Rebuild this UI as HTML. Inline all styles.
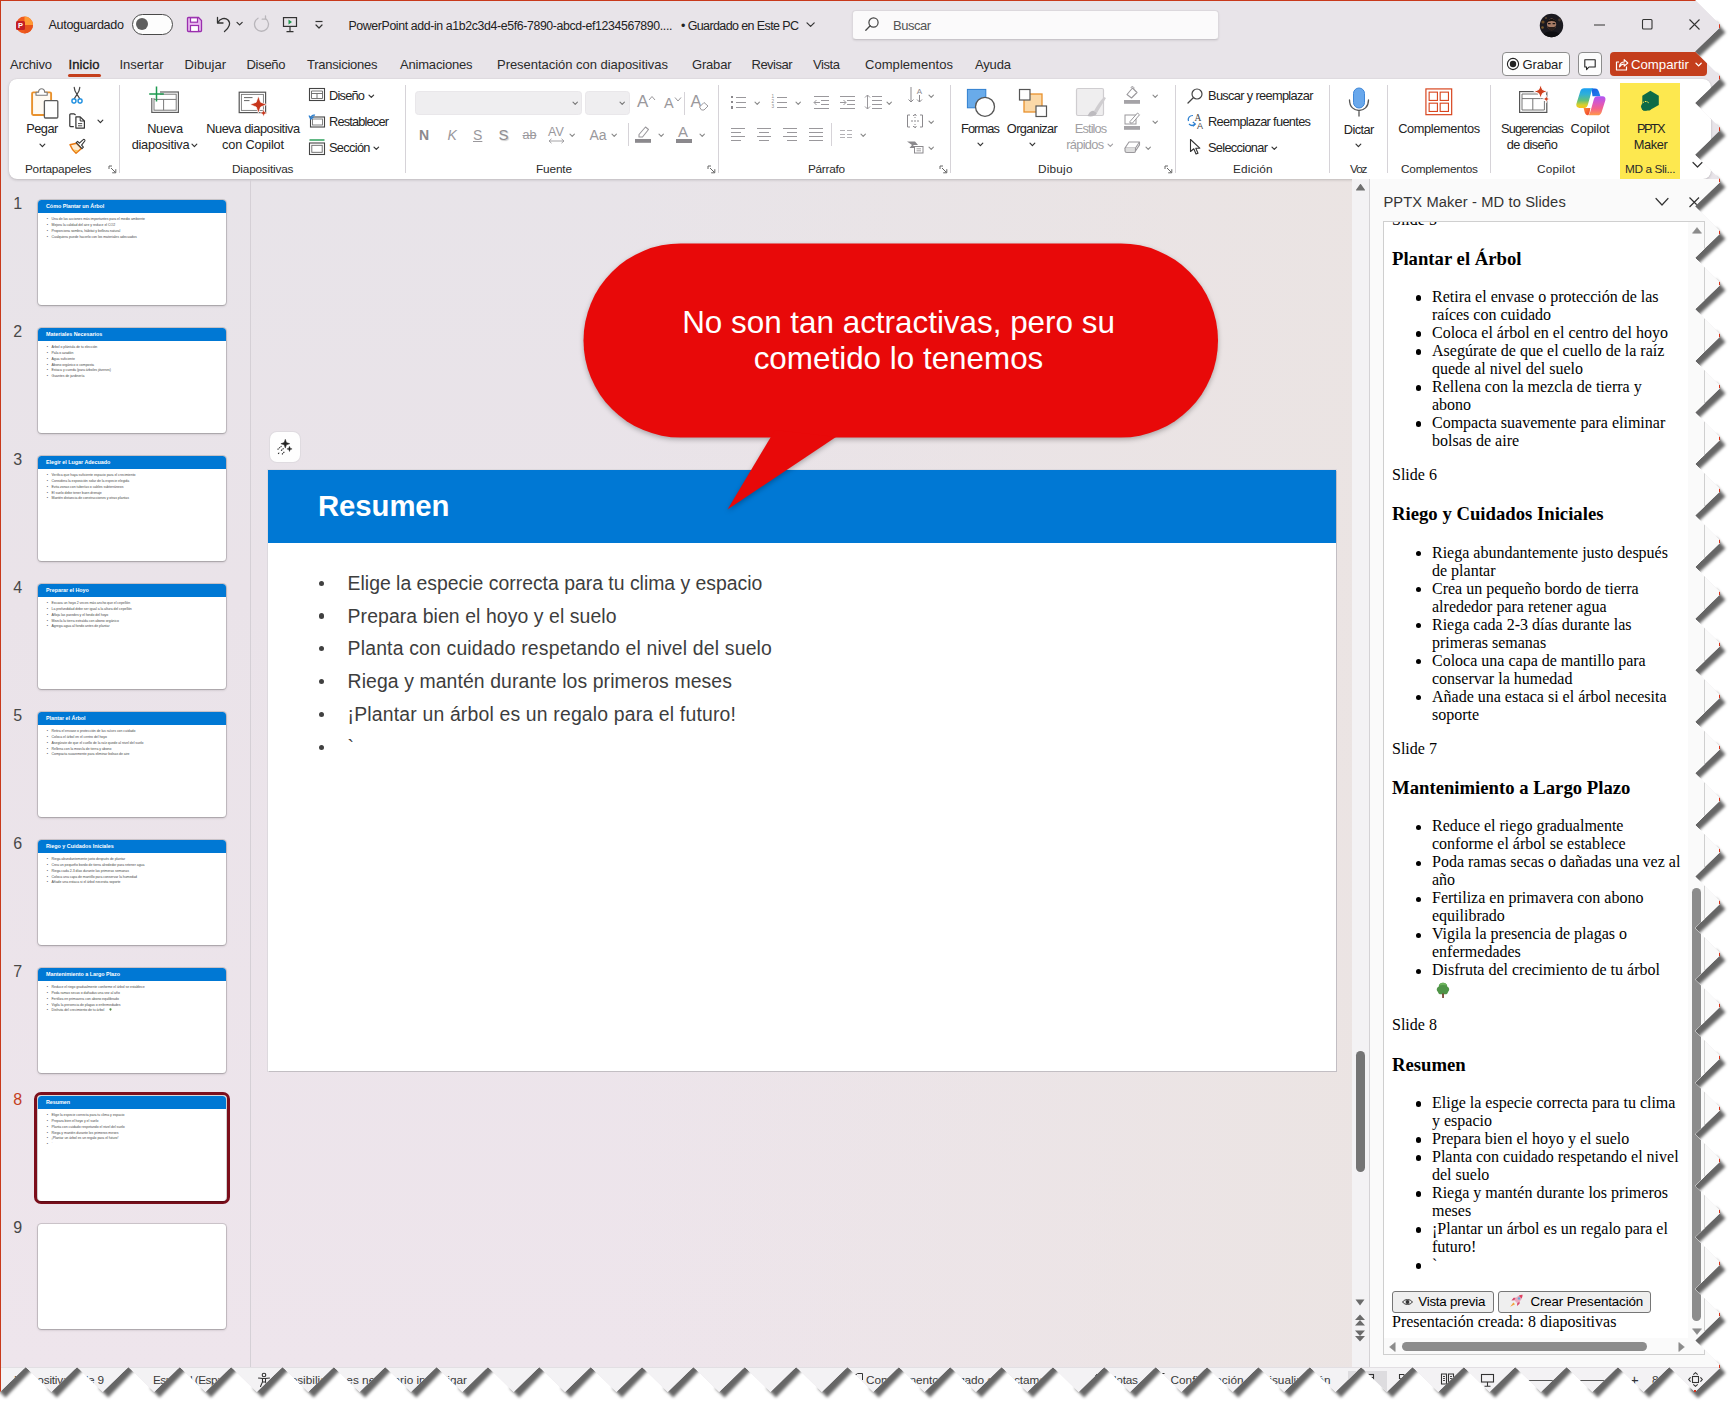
<!DOCTYPE html>
<html><head><meta charset="utf-8"><title>PowerPoint</title>
<style>
html,body{margin:0;padding:0;background:#fff;}
body{width:1735px;height:1407px;overflow:hidden;position:relative;font-family:"Liberation Sans",sans-serif;}
#sh{position:absolute;left:0;top:0;width:1735px;height:1407px;}
#win{position:absolute;left:0;top:0;width:1720px;height:1392px;overflow:hidden;background:#e8e4e9;clip-path:polygon(0.00px 0.00px,1695.00px 0.00px,1720.00px 24.68px,1720.00px 27.48px,1695.00px 51.56px,1720.00px 76.23px,1720.00px 79.03px,1695.00px 103.11px,1720.00px 127.79px,1720.00px 130.59px,1695.00px 154.67px,1720.00px 179.34px,1720.00px 182.14px,1695.00px 206.22px,1720.00px 230.90px,1720.00px 233.70px,1695.00px 257.78px,1720.00px 282.46px,1720.00px 285.26px,1695.00px 309.33px,1720.00px 334.01px,1720.00px 336.81px,1695.00px 360.89px,1720.00px 385.57px,1720.00px 388.37px,1695.00px 412.44px,1720.00px 437.12px,1720.00px 439.92px,1695.00px 464.00px,1720.00px 488.68px,1720.00px 491.48px,1695.00px 515.56px,1720.00px 540.23px,1720.00px 543.03px,1695.00px 567.11px,1720.00px 591.79px,1720.00px 594.59px,1695.00px 618.67px,1720.00px 643.34px,1720.00px 646.14px,1695.00px 670.22px,1720.00px 694.90px,1720.00px 697.70px,1695.00px 721.78px,1720.00px 746.46px,1720.00px 749.26px,1695.00px 773.33px,1720.00px 798.01px,1720.00px 800.81px,1695.00px 824.89px,1720.00px 849.57px,1720.00px 852.37px,1695.00px 876.44px,1720.00px 901.12px,1720.00px 903.92px,1695.00px 928.00px,1720.00px 952.68px,1720.00px 955.48px,1695.00px 979.56px,1720.00px 1004.23px,1720.00px 1007.03px,1695.00px 1031.11px,1720.00px 1055.79px,1720.00px 1058.59px,1695.00px 1082.67px,1720.00px 1107.34px,1720.00px 1110.14px,1695.00px 1134.22px,1720.00px 1158.90px,1720.00px 1161.70px,1695.00px 1185.78px,1720.00px 1210.46px,1720.00px 1213.26px,1695.00px 1237.33px,1720.00px 1262.01px,1720.00px 1264.81px,1695.00px 1288.89px,1720.00px 1313.57px,1720.00px 1316.37px,1695.00px 1340.44px,1720.00px 1365.12px,1720.00px 1367.92px,1695.00px 1392.00px,1669.32px 1367.00px,1643.64px 1392.00px,1617.95px 1367.00px,1592.27px 1392.00px,1566.59px 1367.00px,1540.91px 1392.00px,1515.23px 1367.00px,1489.55px 1392.00px,1463.86px 1367.00px,1438.18px 1392.00px,1412.50px 1367.00px,1386.82px 1392.00px,1361.14px 1367.00px,1335.45px 1392.00px,1309.77px 1367.00px,1284.09px 1392.00px,1258.41px 1367.00px,1232.73px 1392.00px,1207.05px 1367.00px,1181.36px 1392.00px,1155.68px 1367.00px,1130.00px 1392.00px,1104.32px 1367.00px,1078.64px 1392.00px,1052.95px 1367.00px,1027.27px 1392.00px,1001.59px 1367.00px,975.91px 1392.00px,950.23px 1367.00px,924.55px 1392.00px,898.86px 1367.00px,873.18px 1392.00px,847.50px 1367.00px,821.82px 1392.00px,796.14px 1367.00px,770.45px 1392.00px,744.77px 1367.00px,719.09px 1392.00px,693.41px 1367.00px,667.73px 1392.00px,642.05px 1367.00px,616.36px 1392.00px,590.68px 1367.00px,565.00px 1392.00px,539.32px 1367.00px,513.64px 1392.00px,487.95px 1367.00px,462.27px 1392.00px,436.59px 1367.00px,410.91px 1392.00px,385.23px 1367.00px,359.55px 1392.00px,333.86px 1367.00px,308.18px 1392.00px,282.50px 1367.00px,256.82px 1392.00px,231.14px 1367.00px,205.45px 1392.00px,179.77px 1367.00px,154.09px 1392.00px,128.41px 1367.00px,102.73px 1392.00px,77.05px 1367.00px,51.36px 1392.00px,25.68px 1367.00px,0.00px 1392.00px);}
#win div,#win svg{box-sizing:border-box;}
.serif{font-family:"Liberation Serif",serif;}
#pane{position:absolute;left:1383px;top:221px;width:322px;height:1134px;background:#fff;border:1px solid #cfcfcf;overflow:hidden;}
#doc{position:absolute;left:8px;top:-11.3px;width:296px;font-family:"Liberation Serif",serif;font-size:16px;line-height:18px;color:#000;}
#doc p{margin:16px 0 0 0;}
#doc h3{font-size:18.72px;line-height:22px;margin:19.1px 0 0 0;font-weight:bold;}
#doc ul{margin:18.5px 0 0 0;padding:0 0 0 40px;list-style:none;}
#doc li{position:relative;white-space:nowrap;}
#doc li:before{content:"";position:absolute;left:-16.5px;top:7.1px;width:5.4px;height:5.4px;border-radius:50%;background:#000;}
.btn{display:inline-block;box-sizing:border-box;height:22.4px;border:1px solid #767676;border-radius:3px;background:#efefef;font-family:"Liberation Sans",sans-serif;font-size:13.33px;line-height:20.4px;padding:0 0 0 0;vertical-align:top;white-space:nowrap;}
</style></head><body>
<div id="sh"><svg style="position:absolute;left:0;top:0;filter:blur(1.4px)" width="1735" height="1407" viewBox="0 0 1735 1407"><path d="M1716.00 21.58 L1684.00 54.56 L1692.50 63.06 L1725.50 32.58Z M1716.00 73.13 L1684.00 106.11 L1692.50 114.61 L1725.50 84.13Z M1716.00 124.69 L1684.00 157.67 L1692.50 166.17 L1725.50 135.69Z M1716.00 176.24 L1684.00 209.22 L1692.50 217.72 L1725.50 187.24Z M1716.00 227.80 L1684.00 260.78 L1692.50 269.28 L1725.50 238.80Z M1716.00 279.36 L1684.00 312.33 L1692.50 320.83 L1725.50 290.36Z M1716.00 330.91 L1684.00 363.89 L1692.50 372.39 L1725.50 341.91Z M1716.00 382.47 L1684.00 415.44 L1692.50 423.94 L1725.50 393.47Z M1716.00 434.02 L1684.00 467.00 L1692.50 475.50 L1725.50 445.02Z M1716.00 485.58 L1684.00 518.56 L1692.50 527.06 L1725.50 496.58Z M1716.00 537.13 L1684.00 570.11 L1692.50 578.61 L1725.50 548.13Z M1716.00 588.69 L1684.00 621.67 L1692.50 630.17 L1725.50 599.69Z M1716.00 640.24 L1684.00 673.22 L1692.50 681.72 L1725.50 651.24Z M1716.00 691.80 L1684.00 724.78 L1692.50 733.28 L1725.50 702.80Z M1716.00 743.36 L1684.00 776.33 L1692.50 784.83 L1725.50 754.36Z M1716.00 794.91 L1684.00 827.89 L1692.50 836.39 L1725.50 805.91Z M1716.00 846.47 L1684.00 879.44 L1692.50 887.94 L1725.50 857.47Z M1716.00 898.02 L1684.00 931.00 L1692.50 939.50 L1725.50 909.02Z M1716.00 949.58 L1684.00 982.56 L1692.50 991.06 L1725.50 960.58Z M1716.00 1001.13 L1684.00 1034.11 L1692.50 1042.61 L1725.50 1012.13Z M1716.00 1052.69 L1684.00 1085.67 L1692.50 1094.17 L1725.50 1063.69Z M1716.00 1104.24 L1684.00 1137.22 L1692.50 1145.72 L1725.50 1115.24Z M1716.00 1155.80 L1684.00 1188.78 L1692.50 1197.28 L1725.50 1166.80Z M1716.00 1207.36 L1684.00 1240.33 L1692.50 1248.83 L1725.50 1218.36Z M1716.00 1258.91 L1684.00 1291.89 L1692.50 1300.39 L1725.50 1269.91Z M1716.00 1310.47 L1684.00 1343.44 L1692.50 1351.94 L1725.50 1321.47Z M1716.00 1362.02 L1689.50 1389.50 L1698.00 1398.00 L1725.50 1373.02Z M-4.00 1388.00 L28.68 1356.00 L37.18 1364.50 L5.50 1397.50Z M47.36 1388.00 L80.05 1356.00 L88.55 1364.50 L56.86 1397.50Z M98.73 1388.00 L131.41 1356.00 L139.91 1364.50 L108.23 1397.50Z M150.09 1388.00 L182.77 1356.00 L191.27 1364.50 L159.59 1397.50Z M201.45 1388.00 L234.14 1356.00 L242.64 1364.50 L210.95 1397.50Z M252.82 1388.00 L285.50 1356.00 L294.00 1364.50 L262.32 1397.50Z M304.18 1388.00 L336.86 1356.00 L345.36 1364.50 L313.68 1397.50Z M355.55 1388.00 L388.23 1356.00 L396.73 1364.50 L365.05 1397.50Z M406.91 1388.00 L439.59 1356.00 L448.09 1364.50 L416.41 1397.50Z M458.27 1388.00 L490.95 1356.00 L499.45 1364.50 L467.77 1397.50Z M509.64 1388.00 L542.32 1356.00 L550.82 1364.50 L519.14 1397.50Z M561.00 1388.00 L593.68 1356.00 L602.18 1364.50 L570.50 1397.50Z M612.36 1388.00 L645.05 1356.00 L653.55 1364.50 L621.86 1397.50Z M663.73 1388.00 L696.41 1356.00 L704.91 1364.50 L673.23 1397.50Z M715.09 1388.00 L747.77 1356.00 L756.27 1364.50 L724.59 1397.50Z M766.45 1388.00 L799.14 1356.00 L807.64 1364.50 L775.95 1397.50Z M817.82 1388.00 L850.50 1356.00 L859.00 1364.50 L827.32 1397.50Z M869.18 1388.00 L901.86 1356.00 L910.36 1364.50 L878.68 1397.50Z M920.55 1388.00 L953.23 1356.00 L961.73 1364.50 L930.05 1397.50Z M971.91 1388.00 L1004.59 1356.00 L1013.09 1364.50 L981.41 1397.50Z M1023.27 1388.00 L1055.95 1356.00 L1064.45 1364.50 L1032.77 1397.50Z M1074.64 1388.00 L1107.32 1356.00 L1115.82 1364.50 L1084.14 1397.50Z M1126.00 1388.00 L1158.68 1356.00 L1167.18 1364.50 L1135.50 1397.50Z M1177.36 1388.00 L1210.05 1356.00 L1218.55 1364.50 L1186.86 1397.50Z M1228.73 1388.00 L1261.41 1356.00 L1269.91 1364.50 L1238.23 1397.50Z M1280.09 1388.00 L1312.77 1356.00 L1321.27 1364.50 L1289.59 1397.50Z M1331.45 1388.00 L1364.14 1356.00 L1372.64 1364.50 L1340.95 1397.50Z M1382.82 1388.00 L1415.50 1356.00 L1424.00 1364.50 L1392.32 1397.50Z M1434.18 1388.00 L1466.86 1356.00 L1475.36 1364.50 L1443.68 1397.50Z M1485.55 1388.00 L1518.23 1356.00 L1526.73 1364.50 L1495.05 1397.50Z M1536.91 1388.00 L1569.59 1356.00 L1578.09 1364.50 L1546.41 1397.50Z M1588.27 1388.00 L1620.95 1356.00 L1629.45 1364.50 L1597.77 1397.50Z M1639.64 1388.00 L1672.32 1356.00 L1680.82 1364.50 L1649.14 1397.50Z" fill="#000" fill-opacity=".6"/></svg><div id="win">

<div style="position:absolute;left:0.0px;top:179.0px;width:1372.0px;height:1190.0px;background:linear-gradient(90deg,rgba(236,228,229,0) 45%,rgba(235,228,226,.9) 100%),linear-gradient(180deg,#e8e4e9 0%,#eae3e9 35%,#eee5ec 100%);"></div>
<div style="position:absolute;left:0.0px;top:0.0px;width:1720.0px;height:79.0px;background:#e8e4e9;"></div>
<div style="position:absolute;left:0.0px;top:0.0px;width:1720.0px;height:1.2px;background:#c8391b;"></div>
<div style="position:absolute;left:0.0px;top:0.0px;width:1.1px;height:1392.0px;background:#c8391b;"></div>
<div style="position:absolute;left:1718.8px;top:0.0px;width:1.2px;height:1392.0px;background:#d8331a;"></div>
<svg style="position:absolute;left:15.0px;top:16.0px;" width="18" height="18" viewBox="0 0 18 18"><defs><linearGradient id="pg" x1="0" y1="0" x2="1" y2="1"><stop offset="0" stop-color="#ff8f3f"/><stop offset="1" stop-color="#e03a12"/></linearGradient></defs>
<circle cx="9.5" cy="9" r="8.5" fill="#f05a1e"/><path d="M9.5 .5 A8.5 8.5 0 0 1 18 9 L9.5 9 Z" fill="#ff9a33"/><path d="M9.5 9 L18 9 A8.5 8.5 0 0 1 9.5 17.5Z" fill="#e8531c"/>
<rect x="1" y="5" width="9" height="9" rx="1.5" fill="#c41e24"/><text x="5.5" y="12.3" font-size="7.5" font-weight="bold" fill="#fff" text-anchor="middle" font-family="Liberation Sans">P</text></svg>
<div style="position:absolute;top:16.5px;line-height:16px;font-size:12.60px;color:#222;white-space:nowrap;letter-spacing:-0.334px;left:48.5px;">Autoguardado</div>
<div style="position:absolute;left:132.0px;top:14.0px;width:41.0px;height:20.5px;border:1.2px solid #4a4a4a;border-radius:11px;background:#fdfdfd;"></div>
<div style="position:absolute;left:136.0px;top:18.3px;width:12.0px;height:12.0px;border-radius:50%;background:#5e5e5e;"></div>
<svg style="position:absolute;left:186.0px;top:16.0px;" width="17" height="17" viewBox="0 0 17 17"><path d="M1.5 2.5 a1 1 0 0 1 1-1 H12.5 L15.5 4.5 V14.5 a1 1 0 0 1 -1 1 H2.5 a1 1 0 0 1 -1 -1 Z" fill="#e7b7ee" stroke="#9a2fae" stroke-width="1.3"/><rect x="4.5" y="1.8" width="7" height="4.4" fill="#fff" stroke="#9a2fae" stroke-width="1.2"/><rect x="4.5" y="9.5" width="8" height="6" fill="#fff" stroke="#9a2fae" stroke-width="1.2"/></svg>
<svg style="position:absolute;left:215.0px;top:15.0px;" width="18" height="18" viewBox="0 0 18 18"><path d="M2.5 2.5 V8 H8" fill="none" stroke="#333" stroke-width="1.3" stroke-linecap="round" stroke-linejoin="round"/><path d="M2.8 7.6 C5 3.5 10 2.2 13 5 C16 8 14.5 12.5 9.5 16.5" fill="none" stroke="#333" stroke-width="1.3" stroke-linecap="round"/></svg>
<svg style="position:absolute;left:234.9px;top:19.4px" width="9" height="9" viewBox="0 0 9 9"><path d="M2.0 3.3 L4.6 5.9 L7.2 3.3" fill="none" stroke="#333" stroke-width="1.2" stroke-linecap="round" stroke-linejoin="round"/></svg>
<svg style="position:absolute;left:252.0px;top:15.0px;" width="19" height="19" viewBox="0 0 19 19"><path d="M6 3.2 A7 7 0 1 0 13.5 3.5" fill="none" stroke="#b9b6bb" stroke-width="1.3" stroke-linecap="round"/><path d="M13.5 1 V4.2 H10.2" fill="none" stroke="#b9b6bb" stroke-width="1.3" stroke-linecap="round" stroke-linejoin="round"/></svg>
<svg style="position:absolute;left:282.0px;top:16.0px;" width="16" height="18" viewBox="0 0 16 18"><rect x="1.5" y="1.6" width="13" height="8.8" fill="none" stroke="#333" stroke-width="1.2"/><path d="M8 10.5 V15.5 M4.5 15.7 H11.5" stroke="#333" stroke-width="1.2" fill="none"/><path d="M6.5 3.6 L10 6 L6.5 8.4Z" fill="#1e9a50"/></svg>
<svg style="position:absolute;left:314.0px;top:20.0px;" width="10" height="10" viewBox="0 0 10 10"><path d="M1.5 1.5 H8.5" stroke="#333" stroke-width="1.2"/><path d="M2 5 L5 8 L8 5" fill="none" stroke="#333" stroke-width="1.2" stroke-linecap="round" stroke-linejoin="round"/></svg>
<div style="position:absolute;top:17.8px;line-height:16px;font-size:12.30px;color:#222;white-space:nowrap;letter-spacing:-0.363px;left:348.5px;">PowerPoint add-in a1b2c3d4-e5f6-7890-abcd-ef1234567890....</div>
<div style="position:absolute;top:17.8px;line-height:16px;font-size:12.50px;color:#222;white-space:nowrap;letter-spacing:-0.607px;left:681.0px;">• Guardado en Este PC</div>
<svg style="position:absolute;left:804.9px;top:18.9px" width="11" height="11" viewBox="0 0 11 11"><path d="M2.0 3.8 L5.6 7.4 L9.2 3.8" fill="none" stroke="#333" stroke-width="1.2" stroke-linecap="round" stroke-linejoin="round"/></svg>
<div style="position:absolute;left:852.0px;top:10.0px;width:366.5px;height:30.0px;background:#fbfafb;border:1px solid #dcd8dd;border-bottom-color:#c9c5ca;border-radius:4px;box-shadow:0 1px 2px rgba(0,0,0,.08);"></div>
<svg style="position:absolute;left:864.0px;top:16.0px;" width="16" height="16" viewBox="0 0 16 16"><circle cx="9.5" cy="6.5" r="4.6" fill="none" stroke="#444" stroke-width="1.2"/><path d="M6.2 9.8 L1.8 14.2" stroke="#444" stroke-width="1.3" stroke-linecap="round"/></svg>
<div style="position:absolute;top:16.5px;line-height:17px;font-size:13.00px;color:#555;white-space:nowrap;letter-spacing:-0.492px;left:893.0px;">Buscar</div>
<svg style="position:absolute;left:1539.0px;top:12.5px;" width="25" height="25" viewBox="0 0 25 25"><defs><clipPath id="avc"><circle cx="12.5" cy="12.5" r="11.7"/></clipPath></defs><g clip-path="url(#avc)"><rect width="25" height="25" fill="#1b1a20"/><circle cx="4" cy="9" r="1.6" fill="#6a4a22"/><circle cx="3.5" cy="14.5" r="1.3" fill="#7a5a2a"/><circle cx="20.5" cy="7" r="1.4" fill="#4a3a30"/><circle cx="7" cy="5" r="1.1" fill="#5a4630"/><path d="M3 25 C4 19.5 8 18.5 12.5 18.5 C17 18.5 21 19.5 22 25Z" fill="#0e0e11"/><ellipse cx="12.6" cy="11.4" rx="4.6" ry="5.8" fill="#a87c66"/><path d="M7.8 10 C7.4 4.6 17.8 4.6 17.4 10 C16.4 7.2 9 7.2 7.8 10Z" fill="#17120f"/><path d="M8.2 12.6 C8.6 19.4 16.6 19.4 17 12.6 C15.6 14.6 14 14 12.6 14 C11.2 14 9.6 14.6 8.2 12.6Z" fill="#2a1f1b"/><path d="M9 10.6 H11.6 M13.6 10.6 H16.2" stroke="#1a1513" stroke-width="1.1"/></g></svg>
<svg style="position:absolute;left:1593.0px;top:18.0px;" width="14" height="14" viewBox="0 0 14 14"><path d="M1 7 H12" stroke="#333" stroke-width="1.1"/></svg>
<svg style="position:absolute;left:1641.0px;top:18.0px;" width="14" height="14" viewBox="0 0 14 14"><rect x="1.5" y="1.5" width="9.5" height="9.5" rx="1" fill="none" stroke="#333" stroke-width="1.1"/></svg>
<svg style="position:absolute;left:1688.0px;top:18.0px;" width="14" height="14" viewBox="0 0 14 14"><path d="M1.5 1.5 L11.5 11.5 M11.5 1.5 L1.5 11.5" stroke="#333" stroke-width="1.1"/></svg>
<div style="position:absolute;top:55.5px;line-height:17px;font-size:13.00px;color:#2b2b2b;white-space:nowrap;letter-spacing:-0.225px;left:10.0px;">Archivo</div>
<div style="position:absolute;top:55.5px;line-height:17px;font-size:13.00px;color:#1a1a1a;white-space:nowrap;letter-spacing:0.130px;left:68.5px;-webkit-text-stroke:.35px #1a1a1a;">Inicio</div>
<div style="position:absolute;top:55.5px;line-height:17px;font-size:13.00px;color:#2b2b2b;white-space:nowrap;letter-spacing:-0.010px;left:119.5px;">Insertar</div>
<div style="position:absolute;top:55.5px;line-height:17px;font-size:13.00px;color:#2b2b2b;white-space:nowrap;letter-spacing:0.052px;left:184.5px;">Dibujar</div>
<div style="position:absolute;top:55.5px;line-height:17px;font-size:13.00px;color:#2b2b2b;white-space:nowrap;letter-spacing:-0.294px;left:246.5px;">Diseño</div>
<div style="position:absolute;top:55.5px;line-height:17px;font-size:13.00px;color:#2b2b2b;white-space:nowrap;letter-spacing:-0.247px;left:307.0px;">Transiciones</div>
<div style="position:absolute;top:55.5px;line-height:17px;font-size:13.00px;color:#2b2b2b;white-space:nowrap;letter-spacing:-0.193px;left:400.0px;">Animaciones</div>
<div style="position:absolute;top:55.5px;line-height:17px;font-size:13.00px;color:#2b2b2b;white-space:nowrap;letter-spacing:-0.036px;left:497.0px;">Presentación con diapositivas</div>
<div style="position:absolute;top:55.5px;line-height:17px;font-size:13.00px;color:#2b2b2b;white-space:nowrap;letter-spacing:-0.192px;left:692.0px;">Grabar</div>
<div style="position:absolute;top:55.5px;line-height:17px;font-size:13.00px;color:#2b2b2b;white-space:nowrap;letter-spacing:-0.511px;left:751.5px;">Revisar</div>
<div style="position:absolute;top:55.5px;line-height:17px;font-size:13.00px;color:#2b2b2b;white-space:nowrap;letter-spacing:-0.417px;left:813.0px;">Vista</div>
<div style="position:absolute;top:55.5px;line-height:17px;font-size:13.00px;color:#2b2b2b;white-space:nowrap;letter-spacing:0.052px;left:865.0px;">Complementos</div>
<div style="position:absolute;top:55.5px;line-height:17px;font-size:13.00px;color:#2b2b2b;white-space:nowrap;letter-spacing:-0.157px;left:975.0px;">Ayuda</div>
<div style="position:absolute;left:68.0px;top:74.0px;width:32.5px;height:2.6px;background:#c43e1c;border-radius:1.5px;"></div>
<div style="position:absolute;left:1501.5px;top:52.0px;width:68.0px;height:23.5px;background:#fdfdfd;border:1px solid #8d8d8d;border-radius:4px;"></div>
<svg style="position:absolute;left:1506.0px;top:56.7px;" width="14" height="14" viewBox="0 0 14 14"><circle cx="7" cy="7" r="5.6" fill="none" stroke="#222" stroke-width="1.1"/><circle cx="7" cy="7" r="3.2" fill="#222"/></svg>
<div style="position:absolute;top:55.8px;line-height:17px;font-size:13.00px;color:#222;white-space:nowrap;letter-spacing:-0.092px;left:1522.5px;">Grabar</div>
<div style="position:absolute;left:1578.0px;top:52.0px;width:23.5px;height:23.5px;background:#fdfdfd;border:1px solid #8d8d8d;border-radius:4px;"></div>
<svg style="position:absolute;left:1583.0px;top:58.0px;" width="14" height="14" viewBox="0 0 14 14"><path d="M1.8 1.8 H12.2 V9 H6 L3.6 11.6 V9 H1.8 Z" fill="none" stroke="#222" stroke-width="1.1" stroke-linejoin="round"/></svg>
<div style="position:absolute;left:1610.0px;top:52.0px;width:97.0px;height:23.5px;background:#c43e1c;border-radius:4px;"></div>
<svg style="position:absolute;left:1614.0px;top:57.0px;" width="15" height="15" viewBox="0 0 15 15"><path d="M5 5 H2.5 V13 H12.5 V9.5" fill="none" stroke="#fff" stroke-width="1.2" stroke-linejoin="round"/><path d="M5.5 10 C5.5 6.5 8 5 10.2 5 V2.6 L13.8 6 L10.2 9.2 V7 C8.5 7 6.8 7.6 5.5 10Z" fill="none" stroke="#fff" stroke-width="1.1" stroke-linejoin="round"/></svg>
<div style="position:absolute;top:55.8px;line-height:17px;font-size:13.20px;color:#fff;white-space:nowrap;letter-spacing:0.007px;left:1631.0px;">Compartir</div>
<svg style="position:absolute;left:1694.4px;top:59.9px" width="9" height="9" viewBox="0 0 9 9"><path d="M2.0 3.3 L4.6 5.9 L7.2 3.3" fill="none" stroke="#fff" stroke-width="1.3" stroke-linecap="round" stroke-linejoin="round"/></svg>
<div style="position:absolute;left:9.0px;top:79.0px;width:1701.5px;height:100.0px;background:#fff;border-radius:8px;box-shadow:0 1px 3px rgba(0,0,0,.18),0 0 1px rgba(0,0,0,.12);"></div>
<div style="position:absolute;left:119.3px;top:85.0px;width:1.0px;height:88.0px;background:#d6d3d8;"></div>
<div style="position:absolute;left:404.8px;top:85.0px;width:1.0px;height:88.0px;background:#d6d3d8;"></div>
<div style="position:absolute;left:718.3px;top:85.0px;width:1.0px;height:88.0px;background:#d6d3d8;"></div>
<div style="position:absolute;left:949.8px;top:85.0px;width:1.0px;height:88.0px;background:#d6d3d8;"></div>
<div style="position:absolute;left:1174.8px;top:85.0px;width:1.0px;height:88.0px;background:#d6d3d8;"></div>
<div style="position:absolute;left:1328.8px;top:85.0px;width:1.0px;height:88.0px;background:#d6d3d8;"></div>
<div style="position:absolute;left:1386.8px;top:85.0px;width:1.0px;height:88.0px;background:#d6d3d8;"></div>
<div style="position:absolute;left:1489.8px;top:85.0px;width:1.0px;height:88.0px;background:#d6d3d8;"></div>
<div style="position:absolute;left:1620.2px;top:83.2px;width:59.8px;height:96.0px;background:#fde84f;"></div>
<div style="position:absolute;top:161.5px;line-height:15px;font-size:11.80px;color:#2b2b2b;white-space:nowrap;letter-spacing:-0.276px;left:25.0px;">Portapapeles</div>
<div style="position:absolute;top:161.5px;line-height:15px;font-size:11.80px;color:#2b2b2b;white-space:nowrap;letter-spacing:-0.192px;left:232.0px;">Diapositivas</div>
<div style="position:absolute;top:161.5px;line-height:15px;font-size:11.80px;color:#2b2b2b;white-space:nowrap;letter-spacing:-0.148px;left:536.0px;">Fuente</div>
<div style="position:absolute;top:161.5px;line-height:15px;font-size:11.80px;color:#2b2b2b;white-space:nowrap;letter-spacing:-0.283px;left:808.0px;">Párrafo</div>
<div style="position:absolute;top:161.5px;line-height:15px;font-size:11.80px;color:#2b2b2b;white-space:nowrap;letter-spacing:0.209px;left:1038.0px;">Dibujo</div>
<div style="position:absolute;top:161.5px;line-height:15px;font-size:11.80px;color:#2b2b2b;white-space:nowrap;letter-spacing:0.133px;left:1233.0px;">Edición</div>
<div style="position:absolute;top:161.5px;line-height:15px;font-size:11.80px;color:#2b2b2b;white-space:nowrap;letter-spacing:-1.091px;left:1350.0px;">Voz</div>
<div style="position:absolute;top:161.5px;line-height:15px;font-size:11.80px;color:#2b2b2b;white-space:nowrap;letter-spacing:-0.214px;left:1401.0px;">Complementos</div>
<div style="position:absolute;top:161.5px;line-height:15px;font-size:11.80px;color:#2b2b2b;white-space:nowrap;letter-spacing:0.211px;left:1537.0px;">Copilot</div>
<div style="position:absolute;top:161.5px;line-height:15px;font-size:11.80px;color:#2b2b2b;white-space:nowrap;letter-spacing:-0.392px;left:1625.0px;">MD a Sli...</div>
<svg style="position:absolute;left:108.0px;top:165.0px;" width="9" height="9" viewBox="0 0 9 9"><path d="M1 4 V1 H4" fill="none" stroke="#666" stroke-width="1"/><path d="M3 3 L7.5 7.5 M7.8 4.2 V7.8 H4.2" fill="none" stroke="#666" stroke-width="1"/></svg>
<svg style="position:absolute;left:707.0px;top:165.0px;" width="9" height="9" viewBox="0 0 9 9"><path d="M1 4 V1 H4" fill="none" stroke="#666" stroke-width="1"/><path d="M3 3 L7.5 7.5 M7.8 4.2 V7.8 H4.2" fill="none" stroke="#666" stroke-width="1"/></svg>
<svg style="position:absolute;left:939.0px;top:165.0px;" width="9" height="9" viewBox="0 0 9 9"><path d="M1 4 V1 H4" fill="none" stroke="#666" stroke-width="1"/><path d="M3 3 L7.5 7.5 M7.8 4.2 V7.8 H4.2" fill="none" stroke="#666" stroke-width="1"/></svg>
<svg style="position:absolute;left:1164.0px;top:165.0px;" width="9" height="9" viewBox="0 0 9 9"><path d="M1 4 V1 H4" fill="none" stroke="#666" stroke-width="1"/><path d="M3 3 L7.5 7.5 M7.8 4.2 V7.8 H4.2" fill="none" stroke="#666" stroke-width="1"/></svg>
<svg style="position:absolute;left:1691.0px;top:159.0px;" width="13" height="12" viewBox="0 0 13 12"><path d="M2 3.5 L6.5 8 L11 3.5" fill="none" stroke="#333" stroke-width="1.2" stroke-linecap="round" stroke-linejoin="round"/></svg>
<svg style="position:absolute;left:26.0px;top:84.0px;" width="36" height="38" viewBox="0 0 36 38"><rect x="6.1" y="8.4" width="19" height="22.6" rx="1.2" fill="#fffaf2" stroke="#e8912d" stroke-width="1.9"/><path d="M10 11.2 V8.2 H12.6 C12.2 3.6 19 3.6 18.6 8.2 H21.2 V11.2Z" fill="#fff" stroke="#7a7a7a" stroke-width="1.1" stroke-linejoin="round"/><rect x="18.4" y="16.6" width="13.4" height="17.4" rx="1" fill="#fff" stroke="#5a5a5a" stroke-width="1.3"/></svg>
<div style="position:absolute;top:120.2px;line-height:17px;font-size:12.80px;color:#242424;white-space:nowrap;letter-spacing:-0.540px;left:42.0px;width:1200px;margin-left:-600px;text-align:center;">Pegar</div>
<svg style="position:absolute;left:37.6px;top:141.1px" width="8" height="8" viewBox="0 0 8 8"><path d="M2.0 3.2 L4.4 5.6 L6.8 3.2" fill="none" stroke="#333" stroke-width="1.2" stroke-linecap="round" stroke-linejoin="round"/></svg>
<svg style="position:absolute;left:68.0px;top:85.0px;" width="18" height="20" viewBox="0 0 18 20"><path d="M6.2 2.4 C6.4 5 7.6 7.6 9 9.4 L11.8 13.8 M11.8 2.4 C11.6 5 10.4 7.6 9 9.4 L6.2 13.8" stroke="#444" stroke-width="1.2" fill="none" stroke-linecap="round"/><rect x="4" y="14" width="3.9" height="3.9" rx="1.3" fill="#fff" stroke="#1e8fe0" stroke-width="1.5"/><rect x="10.1" y="14" width="3.9" height="3.9" rx="1.3" fill="#fff" stroke="#1e8fe0" stroke-width="1.5"/></svg>
<svg style="position:absolute;left:67.0px;top:111.0px;" width="20" height="20" viewBox="0 0 20 20"><path d="M7 2.8 H3.8 A1 1 0 0 0 2.8 3.8 V14.8 A1 1 0 0 0 3.8 15.6 H6.8 M7 2.8 L8.6 4" fill="none" stroke="#333" stroke-width="1.2"/><path d="M8.9 5.9 H13.2 L17.4 10 V17.1 H8.9Z" fill="#fff" stroke="#333" stroke-width="1.2" stroke-linejoin="round"/><path d="M13.2 6 V10 H17.2" fill="none" stroke="#333" stroke-width="1"/><path d="M11 12.6 H15.2 M11 14.8 H15.2" stroke="#333" stroke-width=".9"/></svg>
<svg style="position:absolute;left:95.6px;top:117.1px" width="8" height="8" viewBox="0 0 8 8"><path d="M2.0 3.2 L4.4 5.6 L6.8 3.2" fill="none" stroke="#333" stroke-width="1.2" stroke-linecap="round" stroke-linejoin="round"/></svg>
<svg style="position:absolute;left:67.0px;top:137.0px;" width="20" height="19" viewBox="0 0 20 19"><path d="M9.5 6.2 L3 7.8 C4.2 11 6 13.6 9 16.2 L14.5 11.4Z" fill="#fdebd2" stroke="#e8770f" stroke-width="1.4" stroke-linejoin="round"/><path d="M6.2 12.6 L9.2 15.4 L11.4 13.2Z" fill="#f8c15a"/><path d="M9.2 5.6 L15 11.6 L16.4 10.2 L14.6 8.2 L17.8 4 C18.4 3 17 1.8 16.2 2.6 L12.4 6.2 L10.6 4.4Z" fill="#fff" stroke="#333" stroke-width="1.1" stroke-linejoin="round"/></svg>
<svg style="position:absolute;left:147.0px;top:84.0px;" width="36" height="32" viewBox="0 0 36 32"><rect x="4.8" y="8" width="26.6" height="20.4" fill="#fff" stroke="#5f5f5f" stroke-width="1.2"/><rect x="7" y="10.2" width="22.2" height="16" fill="none" stroke="#7a7a7a" stroke-width="1"/><path d="M7 15.4 H29.2 M16.6 15.4 V26.2" stroke="#7a7a7a" stroke-width="1"/><rect x="1" y="1" width="12" height="13" fill="#fff"/><path d="M9.5 2.6 V17.4 M2.2 10 H16.8" stroke="#1e9a50" stroke-width="1.5"/></svg>
<div style="position:absolute;top:120.2px;line-height:17px;font-size:12.80px;color:#242424;white-space:nowrap;letter-spacing:-0.250px;left:165.0px;width:1200px;margin-left:-600px;text-align:center;">Nueva</div>
<div style="position:absolute;top:136.2px;line-height:17px;font-size:12.80px;color:#242424;white-space:nowrap;letter-spacing:-0.248px;left:160.5px;width:1200px;margin-left:-600px;text-align:center;">diapositiva</div>
<svg style="position:absolute;left:190.1px;top:141.1px" width="8" height="8" viewBox="0 0 8 8"><path d="M2.0 3.2 L4.4 5.6 L6.8 3.2" fill="none" stroke="#333" stroke-width="1.2" stroke-linecap="round" stroke-linejoin="round"/></svg>
<svg style="position:absolute;left:236.0px;top:88.0px;" width="34" height="32" viewBox="0 0 34 32"><rect x="3.2" y="4.2" width="26.4" height="20.4" fill="#fff" stroke="#555" stroke-width="1.2"/><rect x="5.4" y="6.4" width="22" height="16" fill="none" stroke="#777" stroke-width=".9"/><path d="M8 9.6 H16.5 M8 12.6 H13.5" stroke="#666" stroke-width="1"/><path d="M22.4 8 L24.6 14.2 L30.8 16.6 L24.6 19 L22.4 25.2 L20.2 19 L14 16.6 L20.2 14.2Z" fill="#c7361c" stroke="#fff" stroke-width=".7"/><path d="M27.6 21.4 L28.6 24 L31.2 25 L28.6 26 L27.6 28.6 L26.6 26 L24 25 L26.6 24Z" fill="#c7361c" stroke="#fff" stroke-width=".5"/></svg>
<div style="position:absolute;top:120.2px;line-height:17px;font-size:12.80px;color:#242424;white-space:nowrap;letter-spacing:-0.440px;left:253.0px;width:1200px;margin-left:-600px;text-align:center;">Nueva diapositiva</div>
<div style="position:absolute;top:136.2px;line-height:17px;font-size:12.80px;color:#242424;white-space:nowrap;letter-spacing:-0.204px;left:253.0px;width:1200px;margin-left:-600px;text-align:center;">con Copilot</div>
<svg style="position:absolute;left:308.0px;top:87.0px;" width="18" height="16" viewBox="0 0 18 16"><rect x="1.5" y="1.5" width="15" height="12" fill="#fff" stroke="#444" stroke-width="1.1"/><path d="M3.5 4 H14.5 M3.5 6.5 H14.5 M9 6.5 V11.5 M3.5 4 V11.5 H14.5 V4" fill="none" stroke="#666" stroke-width=".9"/></svg>
<div style="position:absolute;top:87.0px;line-height:17px;font-size:12.80px;color:#242424;white-space:nowrap;letter-spacing:-0.769px;left:329.0px;">Diseño</div>
<svg style="position:absolute;left:366.7px;top:91.7px" width="8" height="8" viewBox="0 0 8 8"><path d="M2.0 3.1 L4.3 5.4 L6.6 3.1" fill="none" stroke="#333" stroke-width="1.2" stroke-linecap="round" stroke-linejoin="round"/></svg>
<svg style="position:absolute;left:308.0px;top:112.0px;" width="18" height="17" viewBox="0 0 18 17"><rect x="2.5" y="5" width="14" height="10" fill="#fff" stroke="#444" stroke-width="1.1"/><rect x="4.5" y="7" width="10" height="6" fill="none" stroke="#777" stroke-width=".9"/><path d="M7 3.2 C4.5 2.5 2.5 4.5 2.8 7" fill="none" stroke="#2a7fd1" stroke-width="1.3"/><path d="M1 3.5 L2.8 7.2 L5.5 4.8" fill="none" stroke="#2a7fd1" stroke-width="1.2" stroke-linejoin="round"/></svg>
<div style="position:absolute;top:113.0px;line-height:17px;font-size:12.80px;color:#242424;white-space:nowrap;letter-spacing:-0.830px;left:329.0px;">Restablecer</div>
<svg style="position:absolute;left:308.0px;top:138.0px;" width="18" height="18" viewBox="0 0 18 18"><path d="M1.5 2 H16.5" stroke="#1e9a50" stroke-width="1.4"/><rect x="1.5" y="5" width="15" height="11.5" fill="#fff" stroke="#444" stroke-width="1.1"/><rect x="3.8" y="7.3" width="10.4" height="7" fill="none" stroke="#666" stroke-width=".9"/></svg>
<div style="position:absolute;top:139.0px;line-height:17px;font-size:12.80px;color:#242424;white-space:nowrap;letter-spacing:-0.673px;left:329.0px;">Sección</div>
<svg style="position:absolute;left:371.7px;top:143.7px" width="8" height="8" viewBox="0 0 8 8"><path d="M2.0 3.1 L4.3 5.4 L6.6 3.1" fill="none" stroke="#333" stroke-width="1.2" stroke-linecap="round" stroke-linejoin="round"/></svg>
<div style="position:absolute;left:414.5px;top:91.0px;width:167.0px;height:23.5px;background:#efeef0;border:1px solid #e9e7ea;border-radius:3.5px;"></div>
<div style="position:absolute;left:584.5px;top:91.0px;width:45.5px;height:23.5px;background:#efeef0;border:1px solid #e9e7ea;border-radius:3.5px;"></div>
<svg style="position:absolute;left:570.8px;top:98.8px" width="8" height="8" viewBox="0 0 8 8"><path d="M2.0 3.1 L4.2 5.3 L6.4 3.1" fill="none" stroke="#777" stroke-width="1.1" stroke-linecap="round" stroke-linejoin="round"/></svg>
<svg style="position:absolute;left:618.3px;top:98.8px" width="8" height="8" viewBox="0 0 8 8"><path d="M2.0 3.1 L4.2 5.3 L6.4 3.1" fill="none" stroke="#777" stroke-width="1.1" stroke-linecap="round" stroke-linejoin="round"/></svg>
<div style="position:absolute;top:91.0px;line-height:22px;font-size:17.00px;color:#9a989c;white-space:nowrap;left:637.0px;">A</div>
<svg style="position:absolute;left:648.0px;top:95.0px;" width="8" height="6" viewBox="0 0 8 6"><path d="M1 5 L4 1.5 L7 5" fill="none" stroke="#9a989c" stroke-width="1"/></svg>
<div style="position:absolute;top:93.5px;line-height:19px;font-size:14.50px;color:#9a989c;white-space:nowrap;left:664.0px;">A</div>
<svg style="position:absolute;left:674.0px;top:96.0px;" width="8" height="6" viewBox="0 0 8 6"><path d="M1 1.5 L4 5 L7 1.5" fill="none" stroke="#9a989c" stroke-width="1"/></svg>
<div style="position:absolute;left:684.0px;top:92.0px;width:1.0px;height:23.0px;background:#d6d3d8;"></div>
<div style="position:absolute;top:91.0px;line-height:21px;font-size:16.50px;color:#9a989c;white-space:nowrap;left:690.5px;">A</div>
<svg style="position:absolute;left:698.0px;top:101.0px;" width="12" height="10" viewBox="0 0 12 10"><path d="M1.5 6 L6 1.5 L10 5 L6 9 H3.5Z" fill="#fff" stroke="#9a989c" stroke-width="1"/></svg>
<div style="position:absolute;top:125.5px;line-height:18px;font-size:14.00px;color:#8b898d;white-space:nowrap;font-weight:bold;left:419.0px;">N</div>
<div style="position:absolute;top:125.5px;line-height:18px;font-size:14.00px;color:#9a989c;white-space:nowrap;left:447.5px;font-style:italic;">K</div>
<div style="position:absolute;top:125.5px;line-height:18px;font-size:14.00px;color:#9a989c;white-space:nowrap;left:473.0px;text-decoration:underline;">S</div>
<div style="position:absolute;top:124.5px;line-height:20px;font-size:15.00px;color:#8f8d91;white-space:nowrap;left:498.5px;text-shadow:1px 1px 1px #ccc;">S</div>
<div style="position:absolute;top:127.0px;line-height:16px;font-size:12.50px;color:#9a989c;white-space:nowrap;left:522.5px;text-decoration:line-through;">ab</div>
<div style="position:absolute;top:123.5px;line-height:16px;font-size:12.50px;color:#9a989c;white-space:nowrap;left:548.0px;">AV</div>
<svg style="position:absolute;left:548.0px;top:138.0px;" width="17" height="6" viewBox="0 0 17 6"><path d="M1 3 H16 M3.5 .8 L1 3 L3.5 5.2 M13.5 .8 L16 3 L13.5 5.2" fill="none" stroke="#9a989c" stroke-width=".9"/></svg>
<svg style="position:absolute;left:568.3px;top:130.8px" width="8" height="8" viewBox="0 0 8 8"><path d="M2.0 3.1 L4.2 5.3 L6.4 3.1" fill="none" stroke="#888" stroke-width="1.1" stroke-linecap="round" stroke-linejoin="round"/></svg>
<div style="position:absolute;top:126.0px;line-height:18px;font-size:14.00px;color:#9a989c;white-space:nowrap;left:589.5px;">Aa</div>
<svg style="position:absolute;left:610.3px;top:130.8px" width="8" height="8" viewBox="0 0 8 8"><path d="M2.0 3.1 L4.2 5.3 L6.4 3.1" fill="none" stroke="#888" stroke-width="1.1" stroke-linecap="round" stroke-linejoin="round"/></svg>
<div style="position:absolute;left:628.0px;top:123.0px;width:1.0px;height:23.0px;background:#d6d3d8;"></div>
<svg style="position:absolute;left:634.0px;top:124.0px;" width="18" height="20" viewBox="0 0 18 20"><path d="M5 10.5 L11.5 3 L14.5 5.5 L8.5 13 H5Z" fill="#fff" stroke="#9a989c" stroke-width="1.1" stroke-linejoin="round"/><rect x="1" y="15" width="16" height="3.8" fill="#8b898d"/></svg>
<svg style="position:absolute;left:656.8px;top:130.8px" width="8" height="8" viewBox="0 0 8 8"><path d="M2.0 3.1 L4.2 5.3 L6.4 3.1" fill="none" stroke="#888" stroke-width="1.1" stroke-linecap="round" stroke-linejoin="round"/></svg>
<div style="position:absolute;top:121.5px;line-height:20px;font-size:15.00px;color:#9a989c;white-space:nowrap;left:678.0px;">A</div>
<div style="position:absolute;left:676.0px;top:139.0px;width:16.0px;height:3.8px;background:#8b898d;"></div>
<svg style="position:absolute;left:698.3px;top:130.8px" width="8" height="8" viewBox="0 0 8 8"><path d="M2.0 3.1 L4.2 5.3 L6.4 3.1" fill="none" stroke="#888" stroke-width="1.1" stroke-linecap="round" stroke-linejoin="round"/></svg>
<div style="position:absolute;left:731.0px;top:96.0px;width:2.2px;height:2.2px;background:#8b898d;"></div>
<div style="position:absolute;left:735.5px;top:96.6px;width:10.0px;height:1.1px;background:#9a989c;"></div>
<div style="position:absolute;left:731.0px;top:101.2px;width:2.2px;height:2.2px;background:#8b898d;"></div>
<div style="position:absolute;left:735.5px;top:101.8px;width:10.0px;height:1.1px;background:#9a989c;"></div>
<div style="position:absolute;left:731.0px;top:106.4px;width:2.2px;height:2.2px;background:#8b898d;"></div>
<div style="position:absolute;left:735.5px;top:107.0px;width:10.0px;height:1.1px;background:#9a989c;"></div>
<svg style="position:absolute;left:753.3px;top:98.8px" width="8" height="8" viewBox="0 0 8 8"><path d="M2.0 3.1 L4.2 5.3 L6.4 3.1" fill="none" stroke="#888" stroke-width="1.1" stroke-linecap="round" stroke-linejoin="round"/></svg>
<div style="position:absolute;left:776.5px;top:96.6px;width:10.5px;height:1.1px;background:#9a989c;"></div>
<div style="position:absolute;top:93.8px;line-height:6px;font-size:4.60px;color:#8b898d;white-space:nowrap;left:771.5px;">1</div>
<div style="position:absolute;left:776.5px;top:101.8px;width:10.5px;height:1.1px;background:#9a989c;"></div>
<div style="position:absolute;top:99.0px;line-height:6px;font-size:4.60px;color:#8b898d;white-space:nowrap;left:771.5px;">2</div>
<div style="position:absolute;left:776.5px;top:107.0px;width:10.5px;height:1.1px;background:#9a989c;"></div>
<div style="position:absolute;top:104.2px;line-height:6px;font-size:4.60px;color:#8b898d;white-space:nowrap;left:771.5px;">3</div>
<svg style="position:absolute;left:794.3px;top:98.8px" width="8" height="8" viewBox="0 0 8 8"><path d="M2.0 3.1 L4.2 5.3 L6.4 3.1" fill="none" stroke="#888" stroke-width="1.1" stroke-linecap="round" stroke-linejoin="round"/></svg>
<div style="position:absolute;left:814.0px;top:96.0px;width:15.0px;height:1.1px;background:#9a989c;"></div>
<div style="position:absolute;left:821.0px;top:100.0px;width:8.0px;height:1.1px;background:#9a989c;"></div>
<div style="position:absolute;left:821.0px;top:104.0px;width:8.0px;height:1.1px;background:#9a989c;"></div>
<div style="position:absolute;left:814.0px;top:108.0px;width:15.0px;height:1.1px;background:#9a989c;"></div>
<svg style="position:absolute;left:813.0px;top:99.0px;" width="8" height="7" viewBox="0 0 8 7"><path d="M7 3.5 H1.2 M3.5 1 L1 3.5 L3.5 6" fill="none" stroke="#9a989c" stroke-width="1"/></svg>
<div style="position:absolute;left:840.0px;top:96.0px;width:15.0px;height:1.1px;background:#9a989c;"></div>
<div style="position:absolute;left:847.0px;top:100.0px;width:8.0px;height:1.1px;background:#9a989c;"></div>
<div style="position:absolute;left:847.0px;top:104.0px;width:8.0px;height:1.1px;background:#9a989c;"></div>
<div style="position:absolute;left:840.0px;top:108.0px;width:15.0px;height:1.1px;background:#9a989c;"></div>
<svg style="position:absolute;left:839.0px;top:99.0px;" width="8" height="7" viewBox="0 0 8 7"><path d="M1 3.5 H6.8 M4.5 1 L7 3.5 L4.5 6" fill="none" stroke="#9a989c" stroke-width="1"/></svg>
<div style="position:absolute;left:872.0px;top:96.0px;width:10.0px;height:1.1px;background:#9a989c;"></div>
<div style="position:absolute;left:872.0px;top:100.0px;width:10.0px;height:1.1px;background:#9a989c;"></div>
<div style="position:absolute;left:872.0px;top:104.0px;width:10.0px;height:1.1px;background:#9a989c;"></div>
<div style="position:absolute;left:872.0px;top:108.0px;width:10.0px;height:1.1px;background:#9a989c;"></div>
<svg style="position:absolute;left:864.0px;top:94.0px;" width="7" height="16" viewBox="0 0 7 16"><path d="M3.5 1 V15 M1 3.5 L3.5 1 L6 3.5 M1 12.5 L3.5 15 L6 12.5" fill="none" stroke="#9a989c" stroke-width="1"/></svg>
<svg style="position:absolute;left:885.3px;top:98.8px" width="8" height="8" viewBox="0 0 8 8"><path d="M2.0 3.1 L4.2 5.3 L6.4 3.1" fill="none" stroke="#888" stroke-width="1.1" stroke-linecap="round" stroke-linejoin="round"/></svg>
<svg style="position:absolute;left:907.0px;top:86.0px;" width="17" height="18" viewBox="0 0 17 18"><path d="M4 1 V16 M1.5 13.5 L4 16 L6.5 13.5 M12.5 9 V16 M10 13.5 L12.5 16 L15 13.5" fill="none" stroke="#8b898d" stroke-width="1"/><text x="12.3" y="7.5" font-size="8" fill="#8b898d" text-anchor="middle" font-family="Liberation Sans">A</text></svg>
<svg style="position:absolute;left:927.3px;top:91.8px" width="8" height="8" viewBox="0 0 8 8"><path d="M2.0 3.1 L4.2 5.3 L6.4 3.1" fill="none" stroke="#888" stroke-width="1.1" stroke-linecap="round" stroke-linejoin="round"/></svg>
<svg style="position:absolute;left:906.0px;top:113.0px;" width="18" height="16" viewBox="0 0 18 16"><path d="M4 2 H1.5 V14 H4 M14 2 H16.5 V14 H14" fill="none" stroke="#8b898d" stroke-width="1"/><path d="M9 1 V5 M7 3 L9 1 L11 3 M9 15 V11 M7 13 L9 15 L11 13 M5 8 H13" fill="none" stroke="#8b898d" stroke-width="1" stroke-dasharray="2 1"/></svg>
<svg style="position:absolute;left:927.3px;top:117.8px" width="8" height="8" viewBox="0 0 8 8"><path d="M2.0 3.1 L4.2 5.3 L6.4 3.1" fill="none" stroke="#888" stroke-width="1.1" stroke-linecap="round" stroke-linejoin="round"/></svg>
<svg style="position:absolute;left:906.0px;top:140.0px;" width="18" height="14" viewBox="0 0 18 14"><path d="M1 1.5 H9 L12 5 H7 L9.5 8 H3.5 L6 5Z" fill="#8b898d"/><rect x="8.5" y="6.5" width="8.5" height="6.5" fill="#fff" stroke="#8b898d" stroke-width="1"/><path d="M10.5 8.8 H15 M10.5 10.8 H15" stroke="#8b898d" stroke-width=".8"/></svg>
<svg style="position:absolute;left:927.3px;top:143.8px" width="8" height="8" viewBox="0 0 8 8"><path d="M2.0 3.1 L4.2 5.3 L6.4 3.1" fill="none" stroke="#888" stroke-width="1.1" stroke-linecap="round" stroke-linejoin="round"/></svg>
<div style="position:absolute;left:731.0px;top:128.0px;width:14.0px;height:1.1px;background:#9a989c;"></div>
<div style="position:absolute;left:731.0px;top:132.0px;width:10.0px;height:1.1px;background:#9a989c;"></div>
<div style="position:absolute;left:731.0px;top:136.0px;width:14.0px;height:1.1px;background:#9a989c;"></div>
<div style="position:absolute;left:731.0px;top:140.0px;width:10.0px;height:1.1px;background:#9a989c;"></div>
<div style="position:absolute;left:757.0px;top:128.0px;width:14.0px;height:1.1px;background:#9a989c;"></div>
<div style="position:absolute;left:759.0px;top:132.0px;width:10.0px;height:1.1px;background:#9a989c;"></div>
<div style="position:absolute;left:757.0px;top:136.0px;width:14.0px;height:1.1px;background:#9a989c;"></div>
<div style="position:absolute;left:759.0px;top:140.0px;width:10.0px;height:1.1px;background:#9a989c;"></div>
<div style="position:absolute;left:783.0px;top:128.0px;width:14.0px;height:1.1px;background:#9a989c;"></div>
<div style="position:absolute;left:787.0px;top:132.0px;width:10.0px;height:1.1px;background:#9a989c;"></div>
<div style="position:absolute;left:783.0px;top:136.0px;width:14.0px;height:1.1px;background:#9a989c;"></div>
<div style="position:absolute;left:787.0px;top:140.0px;width:10.0px;height:1.1px;background:#9a989c;"></div>
<div style="position:absolute;left:809.0px;top:128.0px;width:14.0px;height:1.1px;background:#9a989c;"></div>
<div style="position:absolute;left:809.0px;top:132.0px;width:14.0px;height:1.1px;background:#9a989c;"></div>
<div style="position:absolute;left:809.0px;top:136.0px;width:14.0px;height:1.1px;background:#9a989c;"></div>
<div style="position:absolute;left:809.0px;top:140.0px;width:14.0px;height:1.1px;background:#9a989c;"></div>
<div style="position:absolute;left:831.0px;top:123.0px;width:1.0px;height:23.0px;background:#d6d3d8;"></div>
<div style="position:absolute;left:840.0px;top:130.0px;width:5.0px;height:1.1px;background:#b3b1b5;"></div>
<div style="position:absolute;left:840.0px;top:133.6px;width:5.0px;height:1.1px;background:#b3b1b5;"></div>
<div style="position:absolute;left:840.0px;top:137.2px;width:5.0px;height:1.1px;background:#b3b1b5;"></div>
<div style="position:absolute;left:847.0px;top:130.0px;width:5.0px;height:1.1px;background:#b3b1b5;"></div>
<div style="position:absolute;left:847.0px;top:133.6px;width:5.0px;height:1.1px;background:#b3b1b5;"></div>
<div style="position:absolute;left:847.0px;top:137.2px;width:5.0px;height:1.1px;background:#b3b1b5;"></div>
<svg style="position:absolute;left:858.8px;top:130.8px" width="8" height="8" viewBox="0 0 8 8"><path d="M2.0 3.1 L4.2 5.3 L6.4 3.1" fill="none" stroke="#888" stroke-width="1.1" stroke-linecap="round" stroke-linejoin="round"/></svg>
<svg style="position:absolute;left:965.0px;top:87.0px;" width="32" height="32" viewBox="0 0 32 32"><rect x="2.4" y="2.4" width="18.4" height="18.4" fill="#69abea" stroke="#2f7fd0" stroke-width="1"/><circle cx="20" cy="19.8" r="9.5" fill="#fff" stroke="#555" stroke-width="1.3"/></svg>
<div style="position:absolute;top:120.2px;line-height:17px;font-size:12.80px;color:#242424;white-space:nowrap;letter-spacing:-0.877px;left:980.0px;width:1200px;margin-left:-600px;text-align:center;">Formas</div>
<svg style="position:absolute;left:975.6px;top:140.0px" width="8" height="8" viewBox="0 0 8 8"><path d="M2.0 3.2 L4.4 5.6 L6.8 3.2" fill="none" stroke="#333" stroke-width="1.2" stroke-linecap="round" stroke-linejoin="round"/></svg>
<svg style="position:absolute;left:1017.0px;top:87.0px;" width="32" height="32" viewBox="0 0 32 32"><rect x="7" y="7" width="18" height="18" fill="#fbd9a8" stroke="#e8912d" stroke-width="1.3"/><rect x="2.5" y="2.5" width="10.5" height="10.5" fill="#fff" stroke="#555" stroke-width="1.2"/><rect x="19" y="19" width="10.5" height="10.5" fill="#fff" stroke="#555" stroke-width="1.2"/></svg>
<div style="position:absolute;top:120.2px;line-height:17px;font-size:12.80px;color:#242424;white-space:nowrap;letter-spacing:-0.650px;left:1032.0px;width:1200px;margin-left:-600px;text-align:center;">Organizar</div>
<svg style="position:absolute;left:1027.6px;top:140.0px" width="8" height="8" viewBox="0 0 8 8"><path d="M2.0 3.2 L4.4 5.6 L6.8 3.2" fill="none" stroke="#333" stroke-width="1.2" stroke-linecap="round" stroke-linejoin="round"/></svg>
<svg style="position:absolute;left:1074.0px;top:86.0px;" width="34" height="34" viewBox="0 0 34 34"><rect x="2.5" y="2.5" width="27" height="27" rx="1.5" fill="#efeeef" stroke="#cfcdd0" stroke-width="1.2"/><path d="M30 11 C26 15 22 21 20 25 L23 27 C25 23 29 17 32 12Z" fill="#cfcdd0"/><path d="M20 25 C17 24 15 27 13.5 30 C17 31 22 30 23 27Z" fill="#bdbbbf"/></svg>
<div style="position:absolute;top:120.2px;line-height:17px;font-size:12.80px;color:#a19fa3;white-space:nowrap;letter-spacing:-0.884px;left:1090.6px;width:1200px;margin-left:-600px;text-align:center;">Estilos</div>
<div style="position:absolute;top:136.2px;line-height:17px;font-size:12.80px;color:#a19fa3;white-space:nowrap;letter-spacing:-0.697px;left:1084.8px;width:1200px;margin-left:-600px;text-align:center;">rápidos</div>
<svg style="position:absolute;left:1106.2px;top:140.5px" width="8" height="8" viewBox="0 0 8 8"><path d="M2.0 3.1 L4.3 5.4 L6.6 3.1" fill="none" stroke="#a19fa3" stroke-width="1.1" stroke-linecap="round" stroke-linejoin="round"/></svg>
<svg style="position:absolute;left:1122.0px;top:85.0px;" width="20" height="20" viewBox="0 0 20 20"><path d="M5 9.5 L10.5 3 L15 7.5 L9.5 13 Z" fill="#fff" stroke="#9a989c" stroke-width="1.1" stroke-linejoin="round"/><path d="M9 3 C9 1 12 1 12 3.5" fill="none" stroke="#9a989c" stroke-width="1"/><rect x="2" y="15" width="16" height="3.8" fill="#a5a3a7"/></svg>
<svg style="position:absolute;left:1150.8px;top:91.8px" width="8" height="8" viewBox="0 0 8 8"><path d="M2.0 3.1 L4.2 5.3 L6.4 3.1" fill="none" stroke="#888" stroke-width="1.1" stroke-linecap="round" stroke-linejoin="round"/></svg>
<svg style="position:absolute;left:1122.0px;top:111.0px;" width="20" height="20" viewBox="0 0 20 20"><rect x="3" y="4" width="11" height="9" fill="#fff" stroke="#9a989c" stroke-width="1"/><path d="M8 10.5 L15.5 2 L17.5 3.8 L10.5 12 H8Z" fill="#fff" stroke="#9a989c" stroke-width="1" stroke-linejoin="round"/><rect x="2" y="15" width="16" height="3.8" fill="#a5a3a7"/></svg>
<svg style="position:absolute;left:1150.8px;top:117.8px" width="8" height="8" viewBox="0 0 8 8"><path d="M2.0 3.1 L4.2 5.3 L6.4 3.1" fill="none" stroke="#888" stroke-width="1.1" stroke-linecap="round" stroke-linejoin="round"/></svg>
<svg style="position:absolute;left:1123.0px;top:139.0px;" width="20" height="16" viewBox="0 0 20 16"><path d="M2 9 L6 3 H16.5 L12.5 9Z" fill="#fff" stroke="#9a989c" stroke-width="1.1" stroke-linejoin="round"/><path d="M2 9 V12 C2 13 3 13.5 4 13.5 H11 C12 13.5 12.5 13 12.5 12 V9 M12.5 12 L16.5 6 V3" fill="#ddd" stroke="#9a989c" stroke-width="1.1" stroke-linejoin="round"/></svg>
<svg style="position:absolute;left:1144.3px;top:143.8px" width="8" height="8" viewBox="0 0 8 8"><path d="M2.0 3.1 L4.2 5.3 L6.4 3.1" fill="none" stroke="#888" stroke-width="1.1" stroke-linecap="round" stroke-linejoin="round"/></svg>
<svg style="position:absolute;left:1186.0px;top:87.0px;" width="18" height="18" viewBox="0 0 18 18"><circle cx="11" cy="7" r="5" fill="none" stroke="#444" stroke-width="1.2"/><path d="M7.3 10.7 L2 16" stroke="#444" stroke-width="1.3" stroke-linecap="round"/></svg>
<div style="position:absolute;top:87.0px;line-height:17px;font-size:12.80px;color:#242424;white-space:nowrap;letter-spacing:-0.660px;left:1208.0px;">Buscar y reemplazar</div>
<svg style="position:absolute;left:1186.0px;top:112.0px;" width="19" height="18" viewBox="0 0 19 18"><text x="8.5" y="9" font-size="9.5" fill="#444" font-family="Liberation Serif">A</text><text x="11" y="16.5" font-size="9" fill="#444" font-family="Liberation Sans">A</text><path d="M7 3.5 C3.5 3.5 1.5 6 2.5 9" fill="none" stroke="#2a7fd1" stroke-width="1.2"/><path d="M3 12 C5 14 7.5 13.5 9 12" fill="none" stroke="#2a7fd1" stroke-width="1.2"/><path d="M6.8 10 L9.4 12 L7 14.3" fill="none" stroke="#2a7fd1" stroke-width="1.1"/></svg>
<div style="position:absolute;top:113.0px;line-height:17px;font-size:12.80px;color:#242424;white-space:nowrap;letter-spacing:-0.680px;left:1208.0px;">Reemplazar fuentes</div>
<svg style="position:absolute;left:1188.0px;top:138.0px;" width="14" height="18" viewBox="0 0 14 18"><path d="M2.5 1.5 V13.5 L5.8 10.8 L8 16 L10 15.2 L7.8 10.2 H11.8Z" fill="#fff" stroke="#333" stroke-width="1.1" stroke-linejoin="round"/></svg>
<div style="position:absolute;top:139.0px;line-height:17px;font-size:12.80px;color:#242424;white-space:nowrap;letter-spacing:-0.688px;left:1208.0px;">Seleccionar</div>
<svg style="position:absolute;left:1269.7px;top:143.7px" width="8" height="8" viewBox="0 0 8 8"><path d="M2.0 3.1 L4.3 5.4 L6.6 3.1" fill="none" stroke="#333" stroke-width="1.2" stroke-linecap="round" stroke-linejoin="round"/></svg>
<svg style="position:absolute;left:1345.7px;top:85.6px;" width="26" height="34" viewBox="0 0 26 34"><rect x="7.5" y="2" width="11" height="20" rx="5.5" fill="#69a8ec" stroke="#3f87d8" stroke-width="1"/><path d="M3.5 14 C3.5 28 22.5 28 22.5 14 M13 24.5 V30" fill="none" stroke="#555" stroke-width="1.3" stroke-linecap="round"/></svg>
<div style="position:absolute;top:120.5px;line-height:17px;font-size:12.80px;color:#242424;white-space:nowrap;letter-spacing:-0.585px;left:1358.8px;width:1200px;margin-left:-600px;text-align:center;">Dictar</div>
<svg style="position:absolute;left:1353.6px;top:141.0px" width="8" height="8" viewBox="0 0 8 8"><path d="M2.0 3.2 L4.4 5.6 L6.8 3.2" fill="none" stroke="#333" stroke-width="1.2" stroke-linecap="round" stroke-linejoin="round"/></svg>
<svg style="position:absolute;left:1425.3px;top:88.2px;" width="27.6" height="27.6" viewBox="0 0 30 30"><rect x="1" y="1" width="28" height="28" fill="none" stroke="#d8451e" stroke-width="1.3"/><rect x="4.5" y="4.5" width="9" height="9" fill="none" stroke="#d8451e" stroke-width="1.2"/><rect x="16.5" y="4.5" width="9" height="9" fill="none" stroke="#d8451e" stroke-width="1.2"/><rect x="4.5" y="16.5" width="9" height="9" fill="none" stroke="#d8451e" stroke-width="1.2"/><rect x="16.5" y="16.5" width="9" height="9" fill="none" stroke="#d8451e" stroke-width="1.2"/></svg>
<div style="position:absolute;top:120.2px;line-height:17px;font-size:12.80px;color:#242424;white-space:nowrap;letter-spacing:-0.371px;left:1439.0px;width:1200px;margin-left:-600px;text-align:center;">Complementos</div>
<svg style="position:absolute;left:1516.0px;top:84.0px;" width="36" height="32" viewBox="0 0 36 32"><rect x="3.6" y="7.6" width="27.2" height="20.8" fill="#fff" stroke="#555" stroke-width="1.2"/><path d="M6 10 H22 M6 14.6 H28.4 M16.8 14.6 V26 M6 10 V26 H28.4 V17" fill="none" stroke="#777" stroke-width="1"/><path d="M24.6 .8 L26.5 5.6 L31.4 7.5 L26.5 9.4 L24.6 14.2 L22.7 9.4 L17.8 7.5 L22.7 5.6Z" fill="#d0401e" stroke="#fff" stroke-width="1"/><path d="M30.3 11.4 L31.3 14 L33.9 15 L31.3 16 L30.3 18.6 L29.3 16 L26.7 15 L29.3 14Z" fill="#d0401e" stroke="#fff" stroke-width=".8"/></svg>
<div style="position:absolute;top:120.2px;line-height:17px;font-size:12.80px;color:#242424;white-space:nowrap;letter-spacing:-0.816px;left:1532.0px;width:1200px;margin-left:-600px;text-align:center;">Sugerencias</div>
<div style="position:absolute;top:136.2px;line-height:17px;font-size:12.80px;color:#242424;white-space:nowrap;letter-spacing:-0.564px;left:1532.0px;width:1200px;margin-left:-600px;text-align:center;">de diseño</div>
<svg style="position:absolute;left:1576.0px;top:87.7px;" width="30" height="28" viewBox="0 0 30 28"><defs><linearGradient id="c1" x1="0" y1="0" x2="0" y2="1"><stop offset="0" stop-color="#1a9ff2"/><stop offset=".3" stop-color="#2fb0d8"/><stop offset=".62" stop-color="#63c07a"/><stop offset=".85" stop-color="#d8d02c"/><stop offset="1" stop-color="#f7c41a"/></linearGradient><linearGradient id="c2" x1="0" y1="0" x2="0" y2="1"><stop offset="0" stop-color="#ae56f4"/><stop offset=".35" stop-color="#d957c4"/><stop offset=".65" stop-color="#f4628c"/><stop offset="1" stop-color="#ff9a48"/></linearGradient><linearGradient id="c3" x1="0" y1="0" x2="1" y2="1"><stop offset="0" stop-color="#ff8a3a"/><stop offset="1" stop-color="#ee3d2a"/></linearGradient><linearGradient id="c4" x1="0" y1="0" x2="1" y2="1"><stop offset="0" stop-color="#1a58e0"/><stop offset="1" stop-color="#1a86ee"/></linearGradient></defs>
<path d="M15.5 .4 H19 C21.5 .4 22.3 2 23 4 L24.4 8.3 H16.5Z" fill="url(#c4)"/>
<path d="M7.6 20 H14.4 L13.6 24.2 C13.2 26.2 12.6 27.2 11.6 27.2 C10 27.2 9.2 26 8.6 24Z" fill="url(#c3)"/>
<path d="M8.2 .3 H17.6 C16.6 .8 16 2 15.4 4 L12 16.2 C11.4 18.4 10.4 19.9 8.2 19.9 H3.4 C.8 19.9 -.2 17.8 .5 15.4 L4.2 3.6 C4.9 1.4 6.2 .3 8.2 .3Z" fill="url(#c1)"/>
<path d="M21.6 27.3 H12.2 C13.2 26.8 13.8 25.6 14.4 23.6 L17.8 11.4 C18.4 9.2 19.4 8.3 21.6 8.3 H26.4 C29 8.3 30 10 29.3 12.4 L25.6 24.2 C24.9 26.3 23.6 27.3 21.6 27.3Z" fill="url(#c2)"/></svg>
<div style="position:absolute;top:120.2px;line-height:17px;font-size:12.80px;color:#242424;white-space:nowrap;letter-spacing:-0.141px;left:1590.0px;width:1200px;margin-left:-600px;text-align:center;">Copilot</div>
<svg style="position:absolute;left:1638.0px;top:88.0px;" width="24" height="26" viewBox="0 0 24 26"><path d="M12.4 2.8 L20.8 7.7 V17 L12.4 21.8 L4.3 17 V7.7Z" fill="#0e6b47"/><circle cx="7.2" cy="18.6" r="4.2" fill="#0e6b47"/><rect x="4" y="17" width="9" height="5.6" rx="2.6" fill="#0e6b47"/><path d="M4.8 14.8 C6.6 12.6 9.6 13.2 11.2 15.4" fill="none" stroke="#ffe852" stroke-width="1" stroke-dasharray="1.6 .9"/></svg>
<div style="position:absolute;top:120.2px;line-height:17px;font-size:12.80px;color:#242424;white-space:nowrap;letter-spacing:-1.644px;left:1650.5px;width:1200px;margin-left:-600px;text-align:center;">PPTX</div>
<div style="position:absolute;top:136.2px;line-height:17px;font-size:12.80px;color:#242424;white-space:nowrap;letter-spacing:-0.391px;left:1650.5px;width:1200px;margin-left:-600px;text-align:center;">Maker</div>
<div style="position:absolute;left:250.0px;top:180.0px;width:1.0px;height:1188.0px;background:#d5d0d6;"></div>
<div style="position:absolute;top:192.5px;line-height:21px;font-size:16.00px;color:#484848;white-space:nowrap;left:13.2px;">1</div>
<div style="position:absolute;left:37.5px;top:199.5px;width:188px;height:105.5px;background:#fff;border-radius:3.5px;overflow:hidden;box-shadow:0 0 0 1px rgba(0,0,0,.13),0 1px 2.5px rgba(0,0,0,.22);"><div style="position:absolute;left:0;top:0;width:100%;height:13px;background:#0078d4;"></div><div style="position:absolute;left:8.5px;top:2.2px;font-size:5.4px;line-height:8px;font-weight:bold;color:#fff;white-space:nowrap;letter-spacing:-.02px">Cómo Plantar un Árbol</div><div style="position:absolute;left:9.2px;top:16.60px;font-size:3.5px;line-height:6px;color:#4a4a4a;white-space:nowrap">•</div><div style="position:absolute;left:14px;top:16.60px;font-size:3.5px;line-height:6px;color:#4a4a4a;white-space:nowrap;letter-spacing:-0.042px">Una de las acciones más importantes para el medio ambiente</div><div style="position:absolute;left:9.2px;top:22.43px;font-size:3.5px;line-height:6px;color:#4a4a4a;white-space:nowrap">•</div><div style="position:absolute;left:14px;top:22.43px;font-size:3.5px;line-height:6px;color:#4a4a4a;white-space:nowrap;letter-spacing:-0.039px">Mejora la calidad del aire y reduce el CO2</div><div style="position:absolute;left:9.2px;top:28.26px;font-size:3.5px;line-height:6px;color:#4a4a4a;white-space:nowrap">•</div><div style="position:absolute;left:14px;top:28.26px;font-size:3.5px;line-height:6px;color:#4a4a4a;white-space:nowrap;letter-spacing:-0.039px">Proporciona sombra, hábitat y belleza natural</div><div style="position:absolute;left:9.2px;top:34.09px;font-size:3.5px;line-height:6px;color:#4a4a4a;white-space:nowrap">•</div><div style="position:absolute;left:14px;top:34.09px;font-size:3.5px;line-height:6px;color:#4a4a4a;white-space:nowrap;letter-spacing:-0.042px">Cualquiera puede hacerlo con los materiales adecuados</div></div>
<div style="position:absolute;top:320.5px;line-height:21px;font-size:16.00px;color:#484848;white-space:nowrap;left:13.2px;">2</div>
<div style="position:absolute;left:37.5px;top:327.5px;width:188px;height:105.5px;background:#fff;border-radius:3.5px;overflow:hidden;box-shadow:0 0 0 1px rgba(0,0,0,.13),0 1px 2.5px rgba(0,0,0,.22);"><div style="position:absolute;left:0;top:0;width:100%;height:13px;background:#0078d4;"></div><div style="position:absolute;left:8.5px;top:2.2px;font-size:5.4px;line-height:8px;font-weight:bold;color:#fff;white-space:nowrap;letter-spacing:-.02px">Materiales Necesarios</div><div style="position:absolute;left:9.2px;top:16.60px;font-size:3.5px;line-height:6px;color:#4a4a4a;white-space:nowrap">•</div><div style="position:absolute;left:14px;top:16.60px;font-size:3.5px;line-height:6px;color:#4a4a4a;white-space:nowrap;letter-spacing:-0.038px">Árbol o plántula de tu elección</div><div style="position:absolute;left:9.2px;top:22.43px;font-size:3.5px;line-height:6px;color:#4a4a4a;white-space:nowrap">•</div><div style="position:absolute;left:14px;top:22.43px;font-size:3.5px;line-height:6px;color:#4a4a4a;white-space:nowrap;letter-spacing:-0.043px">Pala o azadón</div><div style="position:absolute;left:9.2px;top:28.26px;font-size:3.5px;line-height:6px;color:#4a4a4a;white-space:nowrap">•</div><div style="position:absolute;left:14px;top:28.26px;font-size:3.5px;line-height:6px;color:#4a4a4a;white-space:nowrap;letter-spacing:-0.040px">Agua suficiente</div><div style="position:absolute;left:9.2px;top:34.09px;font-size:3.5px;line-height:6px;color:#4a4a4a;white-space:nowrap">•</div><div style="position:absolute;left:14px;top:34.09px;font-size:3.5px;line-height:6px;color:#4a4a4a;white-space:nowrap;letter-spacing:-0.044px">Abono orgánico o composta</div><div style="position:absolute;left:9.2px;top:39.92px;font-size:3.5px;line-height:6px;color:#4a4a4a;white-space:nowrap">•</div><div style="position:absolute;left:14px;top:39.92px;font-size:3.5px;line-height:6px;color:#4a4a4a;white-space:nowrap;letter-spacing:-0.040px">Estaca y cuerda (para árboles jóvenes)</div><div style="position:absolute;left:9.2px;top:45.75px;font-size:3.5px;line-height:6px;color:#4a4a4a;white-space:nowrap">•</div><div style="position:absolute;left:14px;top:45.75px;font-size:3.5px;line-height:6px;color:#4a4a4a;white-space:nowrap;letter-spacing:-0.040px">Guantes de jardinería</div></div>
<div style="position:absolute;top:448.5px;line-height:21px;font-size:16.00px;color:#484848;white-space:nowrap;left:13.2px;">3</div>
<div style="position:absolute;left:37.5px;top:455.5px;width:188px;height:105.5px;background:#fff;border-radius:3.5px;overflow:hidden;box-shadow:0 0 0 1px rgba(0,0,0,.13),0 1px 2.5px rgba(0,0,0,.22);"><div style="position:absolute;left:0;top:0;width:100%;height:13px;background:#0078d4;"></div><div style="position:absolute;left:8.5px;top:2.2px;font-size:5.4px;line-height:8px;font-weight:bold;color:#fff;white-space:nowrap;letter-spacing:-.02px">Elegir el Lugar Adecuado</div><div style="position:absolute;left:9.2px;top:16.60px;font-size:3.5px;line-height:6px;color:#4a4a4a;white-space:nowrap">•</div><div style="position:absolute;left:14px;top:16.60px;font-size:3.5px;line-height:6px;color:#4a4a4a;white-space:nowrap;letter-spacing:-0.039px">Verifica que haya suficiente espacio para el crecimiento</div><div style="position:absolute;left:9.2px;top:22.43px;font-size:3.5px;line-height:6px;color:#4a4a4a;white-space:nowrap">•</div><div style="position:absolute;left:14px;top:22.43px;font-size:3.5px;line-height:6px;color:#4a4a4a;white-space:nowrap;letter-spacing:-0.039px">Considera la exposición solar de la especie elegida</div><div style="position:absolute;left:9.2px;top:28.26px;font-size:3.5px;line-height:6px;color:#4a4a4a;white-space:nowrap">•</div><div style="position:absolute;left:14px;top:28.26px;font-size:3.5px;line-height:6px;color:#4a4a4a;white-space:nowrap;letter-spacing:-0.040px">Evita zonas con tuberías o cables subterráneos</div><div style="position:absolute;left:9.2px;top:34.09px;font-size:3.5px;line-height:6px;color:#4a4a4a;white-space:nowrap">•</div><div style="position:absolute;left:14px;top:34.09px;font-size:3.5px;line-height:6px;color:#4a4a4a;white-space:nowrap;letter-spacing:-0.041px">El suelo debe tener buen drenaje</div><div style="position:absolute;left:9.2px;top:39.92px;font-size:3.5px;line-height:6px;color:#4a4a4a;white-space:nowrap">•</div><div style="position:absolute;left:14px;top:39.92px;font-size:3.5px;line-height:6px;color:#4a4a4a;white-space:nowrap;letter-spacing:-0.040px">Mantén distancia de construcciones y otras plantas</div></div>
<div style="position:absolute;top:576.5px;line-height:21px;font-size:16.00px;color:#484848;white-space:nowrap;left:13.2px;">4</div>
<div style="position:absolute;left:37.5px;top:583.5px;width:188px;height:105.5px;background:#fff;border-radius:3.5px;overflow:hidden;box-shadow:0 0 0 1px rgba(0,0,0,.13),0 1px 2.5px rgba(0,0,0,.22);"><div style="position:absolute;left:0;top:0;width:100%;height:13px;background:#0078d4;"></div><div style="position:absolute;left:8.5px;top:2.2px;font-size:5.4px;line-height:8px;font-weight:bold;color:#fff;white-space:nowrap;letter-spacing:-.02px">Preparar el Hoyo</div><div style="position:absolute;left:9.2px;top:16.60px;font-size:3.5px;line-height:6px;color:#4a4a4a;white-space:nowrap">•</div><div style="position:absolute;left:14px;top:16.60px;font-size:3.5px;line-height:6px;color:#4a4a4a;white-space:nowrap;letter-spacing:-0.042px">Excava un hoyo 2 veces más ancho que el cepellón</div><div style="position:absolute;left:9.2px;top:22.43px;font-size:3.5px;line-height:6px;color:#4a4a4a;white-space:nowrap">•</div><div style="position:absolute;left:14px;top:22.43px;font-size:3.5px;line-height:6px;color:#4a4a4a;white-space:nowrap;letter-spacing:-0.038px">La profundidad debe ser igual a la altura del cepellón</div><div style="position:absolute;left:9.2px;top:28.26px;font-size:3.5px;line-height:6px;color:#4a4a4a;white-space:nowrap">•</div><div style="position:absolute;left:14px;top:28.26px;font-size:3.5px;line-height:6px;color:#4a4a4a;white-space:nowrap;letter-spacing:-0.039px">Afloja las paredes y el fondo del hoyo</div><div style="position:absolute;left:9.2px;top:34.09px;font-size:3.5px;line-height:6px;color:#4a4a4a;white-space:nowrap">•</div><div style="position:absolute;left:14px;top:34.09px;font-size:3.5px;line-height:6px;color:#4a4a4a;white-space:nowrap;letter-spacing:-0.040px">Mezcla la tierra extraída con abono orgánico</div><div style="position:absolute;left:9.2px;top:39.92px;font-size:3.5px;line-height:6px;color:#4a4a4a;white-space:nowrap">•</div><div style="position:absolute;left:14px;top:39.92px;font-size:3.5px;line-height:6px;color:#4a4a4a;white-space:nowrap;letter-spacing:-0.041px">Agrega agua al fondo antes de plantar</div></div>
<div style="position:absolute;top:704.5px;line-height:21px;font-size:16.00px;color:#484848;white-space:nowrap;left:13.2px;">5</div>
<div style="position:absolute;left:37.5px;top:711.5px;width:188px;height:105.5px;background:#fff;border-radius:3.5px;overflow:hidden;box-shadow:0 0 0 1px rgba(0,0,0,.13),0 1px 2.5px rgba(0,0,0,.22);"><div style="position:absolute;left:0;top:0;width:100%;height:13px;background:#0078d4;"></div><div style="position:absolute;left:8.5px;top:2.2px;font-size:5.4px;line-height:8px;font-weight:bold;color:#fff;white-space:nowrap;letter-spacing:-.02px">Plantar el Árbol</div><div style="position:absolute;left:9.2px;top:16.60px;font-size:3.5px;line-height:6px;color:#4a4a4a;white-space:nowrap">•</div><div style="position:absolute;left:14px;top:16.60px;font-size:3.5px;line-height:6px;color:#4a4a4a;white-space:nowrap;letter-spacing:-0.039px">Retira el envase o protección de las raíces con cuidado</div><div style="position:absolute;left:9.2px;top:22.43px;font-size:3.5px;line-height:6px;color:#4a4a4a;white-space:nowrap">•</div><div style="position:absolute;left:14px;top:22.43px;font-size:3.5px;line-height:6px;color:#4a4a4a;white-space:nowrap;letter-spacing:-0.039px">Coloca el árbol en el centro del hoyo</div><div style="position:absolute;left:9.2px;top:28.26px;font-size:3.5px;line-height:6px;color:#4a4a4a;white-space:nowrap">•</div><div style="position:absolute;left:14px;top:28.26px;font-size:3.5px;line-height:6px;color:#4a4a4a;white-space:nowrap;letter-spacing:-0.038px">Asegúrate de que el cuello de la raíz quede al nivel del suelo</div><div style="position:absolute;left:9.2px;top:34.09px;font-size:3.5px;line-height:6px;color:#4a4a4a;white-space:nowrap">•</div><div style="position:absolute;left:14px;top:34.09px;font-size:3.5px;line-height:6px;color:#4a4a4a;white-space:nowrap;letter-spacing:-0.040px">Rellena con la mezcla de tierra y abono</div><div style="position:absolute;left:9.2px;top:39.92px;font-size:3.5px;line-height:6px;color:#4a4a4a;white-space:nowrap">•</div><div style="position:absolute;left:14px;top:39.92px;font-size:3.5px;line-height:6px;color:#4a4a4a;white-space:nowrap;letter-spacing:-0.042px">Compacta suavemente para eliminar bolsas de aire</div></div>
<div style="position:absolute;top:832.5px;line-height:21px;font-size:16.00px;color:#484848;white-space:nowrap;left:13.2px;">6</div>
<div style="position:absolute;left:37.5px;top:839.5px;width:188px;height:105.5px;background:#fff;border-radius:3.5px;overflow:hidden;box-shadow:0 0 0 1px rgba(0,0,0,.13),0 1px 2.5px rgba(0,0,0,.22);"><div style="position:absolute;left:0;top:0;width:100%;height:13px;background:#0078d4;"></div><div style="position:absolute;left:8.5px;top:2.2px;font-size:5.4px;line-height:8px;font-weight:bold;color:#fff;white-space:nowrap;letter-spacing:-.02px">Riego y Cuidados Iniciales</div><div style="position:absolute;left:9.2px;top:16.60px;font-size:3.5px;line-height:6px;color:#4a4a4a;white-space:nowrap">•</div><div style="position:absolute;left:14px;top:16.60px;font-size:3.5px;line-height:6px;color:#4a4a4a;white-space:nowrap;letter-spacing:-0.042px">Riega abundantemente justo después de plantar</div><div style="position:absolute;left:9.2px;top:22.43px;font-size:3.5px;line-height:6px;color:#4a4a4a;white-space:nowrap">•</div><div style="position:absolute;left:14px;top:22.43px;font-size:3.5px;line-height:6px;color:#4a4a4a;white-space:nowrap;letter-spacing:-0.041px">Crea un pequeño bordo de tierra alrededor para retener agua</div><div style="position:absolute;left:9.2px;top:28.26px;font-size:3.5px;line-height:6px;color:#4a4a4a;white-space:nowrap">•</div><div style="position:absolute;left:14px;top:28.26px;font-size:3.5px;line-height:6px;color:#4a4a4a;white-space:nowrap;letter-spacing:-0.042px">Riega cada 2-3 días durante las primeras semanas</div><div style="position:absolute;left:9.2px;top:34.09px;font-size:3.5px;line-height:6px;color:#4a4a4a;white-space:nowrap">•</div><div style="position:absolute;left:14px;top:34.09px;font-size:3.5px;line-height:6px;color:#4a4a4a;white-space:nowrap;letter-spacing:-0.042px">Coloca una capa de mantillo para conservar la humedad</div><div style="position:absolute;left:9.2px;top:39.92px;font-size:3.5px;line-height:6px;color:#4a4a4a;white-space:nowrap">•</div><div style="position:absolute;left:14px;top:39.92px;font-size:3.5px;line-height:6px;color:#4a4a4a;white-space:nowrap;letter-spacing:-0.040px">Añade una estaca si el árbol necesita soporte</div></div>
<div style="position:absolute;top:960.5px;line-height:21px;font-size:16.00px;color:#484848;white-space:nowrap;left:13.2px;">7</div>
<div style="position:absolute;left:37.5px;top:967.5px;width:188px;height:105.5px;background:#fff;border-radius:3.5px;overflow:hidden;box-shadow:0 0 0 1px rgba(0,0,0,.13),0 1px 2.5px rgba(0,0,0,.22);"><div style="position:absolute;left:0;top:0;width:100%;height:13px;background:#0078d4;"></div><div style="position:absolute;left:8.5px;top:2.2px;font-size:5.4px;line-height:8px;font-weight:bold;color:#fff;white-space:nowrap;letter-spacing:-.02px">Mantenimiento a Largo Plazo</div><div style="position:absolute;left:9.2px;top:16.60px;font-size:3.5px;line-height:6px;color:#4a4a4a;white-space:nowrap">•</div><div style="position:absolute;left:14px;top:16.60px;font-size:3.5px;line-height:6px;color:#4a4a4a;white-space:nowrap;letter-spacing:-0.041px">Reduce el riego gradualmente conforme el árbol se establece</div><div style="position:absolute;left:9.2px;top:22.43px;font-size:3.5px;line-height:6px;color:#4a4a4a;white-space:nowrap">•</div><div style="position:absolute;left:14px;top:22.43px;font-size:3.5px;line-height:6px;color:#4a4a4a;white-space:nowrap;letter-spacing:-0.043px">Poda ramas secas o dañadas una vez al año</div><div style="position:absolute;left:9.2px;top:28.26px;font-size:3.5px;line-height:6px;color:#4a4a4a;white-space:nowrap">•</div><div style="position:absolute;left:14px;top:28.26px;font-size:3.5px;line-height:6px;color:#4a4a4a;white-space:nowrap;letter-spacing:-0.040px">Fertiliza en primavera con abono equilibrado</div><div style="position:absolute;left:9.2px;top:34.09px;font-size:3.5px;line-height:6px;color:#4a4a4a;white-space:nowrap">•</div><div style="position:absolute;left:14px;top:34.09px;font-size:3.5px;line-height:6px;color:#4a4a4a;white-space:nowrap;letter-spacing:-0.041px">Vigila la presencia de plagas o enfermedades</div><div style="position:absolute;left:9.2px;top:39.92px;font-size:3.5px;line-height:6px;color:#4a4a4a;white-space:nowrap">•</div><div style="position:absolute;left:14px;top:39.92px;font-size:3.5px;line-height:6px;color:#4a4a4a;white-space:nowrap;letter-spacing:-0.038px">Disfruta del crecimiento de tu árbol</div><svg style="position:absolute;left:71.5px;top:40.6px" width="3" height="3.6" viewBox="0 0 16 18"><path d="M8 .8 C1 1 0 11 6.6 12.2 L9.4 12.2 C16 11 15 1 8 .8Z" fill="#4f9447"/><path d="M7 11.5 L7.2 16 L8.9 16 L9 11.5Z" fill="#7a4a38"/></svg></div>
<div style="position:absolute;top:1088.5px;line-height:21px;font-size:16.00px;color:#c43e1c;white-space:nowrap;left:13.2px;">8</div>
<div style="position:absolute;left:34.0px;top:1092.0px;width:195.5px;height:112.0px;border:3px solid #7d0f1c;border-radius:7px;background:#fff;"></div>
<div style="position:absolute;left:37.5px;top:1095.5px;width:188px;height:105.5px;background:#fff;border-radius:3.5px;overflow:hidden;box-shadow:0 0 0 1px rgba(0,0,0,.13),0 1px 2.5px rgba(0,0,0,.22);"><div style="position:absolute;left:0;top:0;width:100%;height:13px;background:#0078d4;"></div><div style="position:absolute;left:8.5px;top:2.2px;font-size:5.4px;line-height:8px;font-weight:bold;color:#fff;white-space:nowrap;letter-spacing:-.02px">Resumen</div><div style="position:absolute;left:9.2px;top:16.60px;font-size:3.5px;line-height:6px;color:#4a4a4a;white-space:nowrap">•</div><div style="position:absolute;left:14px;top:16.60px;font-size:3.5px;line-height:6px;color:#4a4a4a;white-space:nowrap;letter-spacing:-0.039px">Elige la especie correcta para tu clima y espacio</div><div style="position:absolute;left:9.2px;top:22.43px;font-size:3.5px;line-height:6px;color:#4a4a4a;white-space:nowrap">•</div><div style="position:absolute;left:14px;top:22.43px;font-size:3.5px;line-height:6px;color:#4a4a4a;white-space:nowrap;letter-spacing:-0.039px">Prepara bien el hoyo y el suelo</div><div style="position:absolute;left:9.2px;top:28.26px;font-size:3.5px;line-height:6px;color:#4a4a4a;white-space:nowrap">•</div><div style="position:absolute;left:14px;top:28.26px;font-size:3.5px;line-height:6px;color:#4a4a4a;white-space:nowrap;letter-spacing:-0.039px">Planta con cuidado respetando el nivel del suelo</div><div style="position:absolute;left:9.2px;top:34.09px;font-size:3.5px;line-height:6px;color:#4a4a4a;white-space:nowrap">•</div><div style="position:absolute;left:14px;top:34.09px;font-size:3.5px;line-height:6px;color:#4a4a4a;white-space:nowrap;letter-spacing:-0.042px">Riega y mantén durante los primeros meses</div><div style="position:absolute;left:9.2px;top:39.92px;font-size:3.5px;line-height:6px;color:#4a4a4a;white-space:nowrap">•</div><div style="position:absolute;left:14px;top:39.92px;font-size:3.5px;line-height:6px;color:#4a4a4a;white-space:nowrap;letter-spacing:-0.038px">¡Plantar un árbol es un regalo para el futuro!</div><div style="position:absolute;left:9.2px;top:45.75px;font-size:3.5px;line-height:6px;color:#4a4a4a;white-space:nowrap">•</div><div style="position:absolute;left:14px;top:45.75px;font-size:3.5px;line-height:6px;color:#4a4a4a;white-space:nowrap;letter-spacing:-0.029px">`</div></div>
<div style="position:absolute;top:1216.5px;line-height:21px;font-size:16.00px;color:#484848;white-space:nowrap;left:13.2px;">9</div>
<div style="position:absolute;left:37.5px;top:1223.5px;width:188px;height:105.5px;background:#fff;border-radius:3.5px;overflow:hidden;box-shadow:0 0 0 1px rgba(0,0,0,.13),0 1px 2.5px rgba(0,0,0,.22);"></div>
<div style="position:absolute;left:268.3px;top:470.0px;width:1067.8px;height:601.3px;background:#fff;box-shadow:1px 1px 0 0 #c2bec3,0 0 0 1px #ddd9de;"></div>
<div style="position:absolute;left:268.3px;top:470.2px;width:1067.8px;height:72.8px;background:#0078d4;"></div>
<div style="position:absolute;top:487.0px;line-height:38px;font-size:29.30px;color:#fff;white-space:nowrap;letter-spacing:-0.066px;font-weight:bold;left:318.0px;">Resumen</div>
<div style="position:absolute;left:318.7px;top:580.6px;width:5.2px;height:5.2px;border-radius:50%;background:#404040;"></div>
<div style="position:absolute;top:570.7px;line-height:25px;font-size:19.40px;color:#3d3d3d;white-space:nowrap;letter-spacing:-0.003px;left:347.6px;">Elige la especie correcta para tu clima y espacio</div>
<div style="position:absolute;left:318.7px;top:613.4px;width:5.2px;height:5.2px;border-radius:50%;background:#404040;"></div>
<div style="position:absolute;top:603.5px;line-height:25px;font-size:19.40px;color:#3d3d3d;white-space:nowrap;letter-spacing:0.087px;left:347.6px;">Prepara bien el hoyo y el suelo</div>
<div style="position:absolute;left:318.7px;top:646.2px;width:5.2px;height:5.2px;border-radius:50%;background:#404040;"></div>
<div style="position:absolute;top:636.3px;line-height:25px;font-size:19.40px;color:#3d3d3d;white-space:nowrap;letter-spacing:0.174px;left:347.6px;">Planta con cuidado respetando el nivel del suelo</div>
<div style="position:absolute;left:318.7px;top:679.0px;width:5.2px;height:5.2px;border-radius:50%;background:#404040;"></div>
<div style="position:absolute;top:669.1px;line-height:25px;font-size:19.40px;color:#3d3d3d;white-space:nowrap;letter-spacing:0.096px;left:347.6px;">Riega y mantén durante los primeros meses</div>
<div style="position:absolute;left:318.7px;top:711.8px;width:5.2px;height:5.2px;border-radius:50%;background:#404040;"></div>
<div style="position:absolute;top:701.9px;line-height:25px;font-size:19.40px;color:#3d3d3d;white-space:nowrap;letter-spacing:0.173px;left:347.6px;">¡Plantar un árbol es un regalo para el futuro!</div>
<div style="position:absolute;left:318.7px;top:744.6px;width:5.2px;height:5.2px;border-radius:50%;background:#404040;"></div>
<div style="position:absolute;top:734.7px;line-height:25px;font-size:19.40px;color:#3d3d3d;white-space:nowrap;left:347.6px;">`</div>
<div style="position:absolute;left:269.6px;top:431.6px;width:30.6px;height:30.8px;background:#fefefe;box-shadow:0 0 0 1px #dfdbe0;border-radius:7px;"></div>
<svg style="position:absolute;left:270.0px;top:432.0px;" width="30" height="30" viewBox="0 0 30 30"><path d="M15.3 7.3 L16.4 10.6 L19.7 11.7 L16.4 12.8 L15.3 16.1 L14.2 12.8 L10.9 11.7 L14.2 10.6Z" fill="#222" stroke="#222" stroke-width=".5" stroke-linejoin="round"/><path d="M19.5 14.3 L20.2 16.2 L22.1 16.9 L20.2 17.6 L19.5 19.5 L18.8 17.6 L16.9 16.9 L18.8 16.2Z" fill="#222" stroke="#222" stroke-width=".4" stroke-linejoin="round"/><path d="M7.6 17.5 L11.5 14.2 M11.1 18.6 L13.8 16.2 M8.1 21.8 L9.8 20.3 M12 22.3 L14.8 19.4" stroke="#222" stroke-width="1.05" stroke-dasharray="1.3 .7" fill="none"/></svg>
<svg style="position:absolute;left:560px;top:225px;filter:drop-shadow(0px 2px 2.5px rgba(0,0,0,.28))" width="690" height="300" viewBox="560 225 690 300"><rect x="583.5" y="243.5" width="634.5" height="194" rx="97" fill="#e80909"/><path d="M775 430 L836 437 L727.5 509.5Z" fill="#e80909"/></svg>
<div style="position:absolute;top:302.0px;line-height:41px;font-size:31.40px;color:#fff;white-space:nowrap;left:898.5px;width:1200px;margin-left:-600px;text-align:center;">No son tan actractivas, pero su</div>
<div style="position:absolute;top:337.5px;line-height:41px;font-size:31.40px;color:#fff;white-space:nowrap;left:898.5px;width:1200px;margin-left:-600px;text-align:center;">cometido lo tenemos</div>
<div style="position:absolute;left:1352.4px;top:179.0px;width:17.0px;height:1189.0px;background:#f3f2f4;"></div>
<div style="position:absolute;left:1356.0px;top:1051.0px;width:9.0px;height:121.0px;background:#747474;border-radius:4.5px;"></div>
<svg style="position:absolute;left:1355.0px;top:183.0px;" width="11" height="9" viewBox="0 0 11 9"><path d="M1.6 7 L5.5 1.6 L9.4 7Z" fill="#707070" stroke="#707070" stroke-width="1.2" stroke-linejoin="round"/></svg>
<svg style="position:absolute;left:1354.0px;top:1298.0px;" width="12" height="9" viewBox="0 0 12 9"><path d="M1.5 1.5 L6 7.5 L10.5 1.5Z" fill="#6b6b6b"/></svg>
<svg style="position:absolute;left:1353.0px;top:1313.0px;" width="14" height="14" viewBox="0 0 14 14"><path d="M2 7 L7 1.5 L12 7Z M2 12.5 L7 7 L12 12.5Z" fill="#6b6b6b"/></svg>
<svg style="position:absolute;left:1353.0px;top:1329.0px;" width="14" height="14" viewBox="0 0 14 14"><path d="M2 1.5 L7 7 L12 1.5Z M2 7 L7 12.5 L12 7Z" fill="#6b6b6b"/></svg>
<div style="position:absolute;left:1369.0px;top:179.0px;width:351.0px;height:1190.0px;background:#fafafa;border-left:1px solid #d4d2d5;"></div>
<div style="position:absolute;top:193.0px;line-height:19px;font-size:14.70px;color:#333;white-space:nowrap;letter-spacing:0.116px;left:1383.4px;">PPTX Maker - MD to Slides</div>
<svg style="position:absolute;left:1654.0px;top:196.0px;" width="16" height="12" viewBox="0 0 16 12"><path d="M2 2.5 L8 9 L14 2.5" fill="none" stroke="#333" stroke-width="1.2" stroke-linecap="round" stroke-linejoin="round"/></svg>
<svg style="position:absolute;left:1688.0px;top:196.0px;" width="13" height="13" viewBox="0 0 13 13"><path d="M1.5 1.5 L11 11 M11 1.5 L1.5 11" stroke="#333" stroke-width="1.2"/></svg>
<div id="pane"><div id="doc">
<p style="margin-top:0">Slide 5</p>
<h3>Plantar el Árbol</h3>
<ul><li>Retira el envase o protección de las<br>raíces con cuidado</li><li>Coloca el árbol en el centro del hoyo</li><li>Asegúrate de que el cuello de la raíz<br>quede al nivel del suelo</li><li>Rellena con la mezcla de tierra y<br>abono</li><li>Compacta suavemente para eliminar<br>bolsas de aire</li></ul>
<p>Slide 6</p>
<h3>Riego y Cuidados Iniciales</h3>
<ul><li>Riega abundantemente justo después<br>de plantar</li><li>Crea un pequeño bordo de tierra<br>alrededor para retener agua</li><li>Riega cada 2-3 días durante las<br>primeras semanas</li><li>Coloca una capa de mantillo para<br>conservar la humedad</li><li>Añade una estaca si el árbol necesita<br>soporte</li></ul>
<p>Slide 7</p>
<h3>Mantenimiento a Largo Plazo</h3>
<ul><li>Reduce el riego gradualmente<br>conforme el árbol se establece</li><li>Poda ramas secas o dañadas una vez al<br>año</li><li>Fertiliza en primavera con abono<br>equilibrado</li><li>Vigila la presencia de plagas o<br>enfermedades</li><li>Disfruta del crecimiento de tu árbol<br><span style="display:inline-block;height:21px;vertical-align:top;"><svg width="16" height="18" viewBox="0 0 16 18" style="margin:3px 0 0 3px"><path d="M8 .8 C5.2 .8 3.6 2.6 3.8 4.6 C1.6 5.4 1 8.6 3 10 C3.2 12 5 12.6 6.6 12.2 L9.4 12.2 C11 12.6 12.8 12 13 10 C15 8.6 14.4 5.4 12.2 4.6 C12.4 2.6 10.8 .8 8 .8Z" fill="#4f9447"/><path d="M8 .8 C5.8 .8 4.4 2 4 3.6 C6 2.8 10 2.8 12 3.6 C11.6 2 10.2 .8 8 .8Z" fill="#6db35d"/><path d="M7 11.5 L7.2 16 L8.9 16 L9 11.5Z" fill="#7a4a38"/></svg></span></li></ul>
<p>Slide 8</p>
<h3>Resumen</h3>
<ul><li>Elige la especie correcta para tu clima<br>y espacio</li><li>Prepara bien el hoyo y el suelo</li><li>Planta con cuidado respetando el nivel<br>del suelo</li><li>Riega y mantén durante los primeros<br>meses</li><li>¡Plantar un árbol es un regalo para el<br>futuro!</li><li>`</li></ul>
<div style="margin-top:16.6px;height:21.6px;white-space:nowrap;font-size:0;line-height:0"><span class="btn" style="width:101.6px"><svg width="11" height="8" viewBox="0 0 11 8" style="margin:0 5.2px 0 9px;vertical-align:-0.5px"><path d="M.6 4 C2.6 .8 8.4 .8 10.4 4 C8.4 7.2 2.6 7.2 .6 4Z" fill="none" stroke="#333" stroke-width="1"/><circle cx="5.5" cy="4" r="1.9" fill="#333"/></svg><span style="letter-spacing:-0.2px">Vista previa</span></span><span class="btn" style="width:152.2px;margin-left:4.8px"><svg width="15" height="14" viewBox="0 0 15 14" style="margin:0 6.5px 0 9.5px;vertical-align:-2.5px"><path d="M13.5 .8 C10 .8 7 2.8 5.3 6.2 L8.2 9.2 C11.6 7.6 13.5 4.4 13.5 .8Z" fill="#e9a9bd"/><path d="M13.5 .8 C12 .8 10.8 1.2 9.8 1.8 L12.6 4.6 C13.2 3.4 13.5 2.2 13.5 .8Z" fill="#e0405f"/><path d="M5.3 6.2 L2.4 6.4 L4.6 3.8 L6.8 3.8Z M8.2 9.2 L8 12 L10.6 9.8 L10.6 7.6Z" fill="#d9456c"/><path d="M4.4 8.6 L1.2 12.8 L6 10.2Z" fill="#f2a23a"/><circle cx="10" cy="4.4" r="1.2" fill="#6aa8d8"/></svg><span style="letter-spacing:-0.12px">Crear Presentación</span></span></div>
<div style="margin-top:1px;white-space:nowrap">Presentación creada: 8 diapositivas</div></div>
<!-- scrollbars -->
<div style="position:absolute;left:304px;top:0;width:16px;height:1116px;background:#fafafa;"></div>
<div style="position:absolute;left:0px;top:1116px;width:320px;height:16px;background:#fafafa;"></div>
<svg style="position:absolute;left:307.6px;top:5.2px" width="10" height="7" viewBox="0 0 10 7"><path d="M.5 6.2 L5 .6 L9.5 6.2Z" fill="#8b8b8b" stroke="#8b8b8b" stroke-width=".6" stroke-linejoin="round"/></svg>
<svg style="position:absolute;left:307.6px;top:1106.2px" width="10" height="7" viewBox="0 0 10 7"><path d="M.5 .8 L5 6.4 L9.5 .8Z" fill="#8b8b8b" stroke="#8b8b8b" stroke-width=".6" stroke-linejoin="round"/></svg>
<div style="position:absolute;left:308px;top:666.4px;width:9px;height:432.2px;border-radius:5px;background:#8c8c8c;"></div>
<svg style="position:absolute;left:4.6px;top:1119.6px" width="7" height="10" viewBox="0 0 7 10"><path d="M6.2 .5 L.6 5 L6.2 9.5Z" fill="#8b8b8b" stroke="#8b8b8b" stroke-width=".6" stroke-linejoin="round"/></svg>
<svg style="position:absolute;left:293.6px;top:1119.6px" width="7" height="10" viewBox="0 0 7 10"><path d="M.8 .5 L6.4 5 L.8 9.5Z" fill="#8b8b8b" stroke="#8b8b8b" stroke-width=".6" stroke-linejoin="round"/></svg>
<div style="position:absolute;left:18px;top:1120px;width:245px;height:9px;border-radius:5px;background:#8c8c8c;"></div>
</div>
<div style="position:absolute;left:0.0px;top:1367.5px;width:1720.0px;height:25.0px;background:#f3f2f4;"></div>
<div style="position:absolute;left:0.0px;top:1367.0px;width:1720.0px;height:1.0px;background:#e2dfe3;"></div>
<div style="position:absolute;left:0.0px;top:0.0px;width:1.1px;height:1392.0px;background:#c8391b;"></div>
<div style="position:absolute;top:1372.5px;line-height:15px;font-size:11.80px;color:#3a3a3a;white-space:nowrap;letter-spacing:-0.224px;left:14.0px;">Diapositiva 8 de 9</div>
<div style="position:absolute;top:1372.5px;line-height:15px;font-size:11.80px;color:#3a3a3a;white-space:nowrap;letter-spacing:-0.520px;left:153.0px;">Español (España)</div>
<div style="position:absolute;top:1372.5px;line-height:15px;font-size:11.80px;color:#3a3a3a;white-space:nowrap;letter-spacing:-0.003px;left:271.0px;">Accesibilidad: es necesario investigar</div>
<svg style="position:absolute;left:257.0px;top:1372.0px;" width="14" height="16" viewBox="0 0 14 16"><circle cx="7" cy="3" r="1.8" fill="none" stroke="#333" stroke-width="1.1"/><path d="M1.5 6 L5.5 6.5 V10 L3.5 14.5 M12.5 6 L8.5 6.5 V10 L10.5 14.5 M5.5 6.5 H8.5 M5.5 10 H8.5" fill="none" stroke="#333" stroke-width="1.1" stroke-linecap="round"/></svg>
<svg style="position:absolute;left:853.0px;top:1372.0px;" width="12" height="14" viewBox="0 0 12 14"><path d="M2 12 V3.5 L4.5 1.5 H9.5 V8" fill="none" stroke="#333" stroke-width="1"/></svg>
<svg style="position:absolute;left:1090.0px;top:1372.0px;" width="14" height="14" viewBox="0 0 14 14"><path d="M2 11.5 H12 M3.5 8.5 H10.5 M7 2 V6 M5 4 L7 2 L9 4" fill="none" stroke="#333" stroke-width="1"/></svg>
<svg style="position:absolute;left:1152.0px;top:1372.0px;" width="14" height="14" viewBox="0 0 14 14"><rect x="1.5" y="3.5" width="9" height="7" fill="none" stroke="#333" stroke-width="1"/><path d="M10.5 3.5 V1.5 H12.5" fill="none" stroke="#333" stroke-width="1"/></svg>
<div style="position:absolute;top:1372.5px;line-height:15px;font-size:11.80px;color:#3a3a3a;white-space:nowrap;letter-spacing:-0.065px;left:866.0px;">Complemento cargado correctamente</div>
<div style="position:absolute;top:1372.5px;line-height:15px;font-size:11.80px;color:#3a3a3a;white-space:nowrap;letter-spacing:-0.206px;left:1108.0px;">Notas</div>
<div style="position:absolute;top:1372.5px;line-height:15px;font-size:11.80px;color:#3a3a3a;white-space:nowrap;letter-spacing:0.021px;left:1170.5px;">Configuración de visualización</div>
<div style="position:absolute;left:1347.5px;top:1370.5px;width:39.5px;height:22.0px;background:#dddcdf;"></div>
<svg style="position:absolute;left:1360.0px;top:1372.5px;" width="15" height="14" viewBox="0 0 15 14"><rect x="1.5" y="1.5" width="12" height="10.5" fill="none" stroke="#333" stroke-width="1.1"/><path d="M5.5 1.5 V12 M5.5 4.5 H13.5" stroke="#333" stroke-width="1"/></svg>
<svg style="position:absolute;left:1398.0px;top:1372.5px;" width="15" height="14" viewBox="0 0 15 14"><path d="M1.5 1.5 H6 V5.5 H1.5Z M8.5 1.5 H13 V5.5 H8.5Z M1.5 8 H6 V12 H1.5Z M8.5 8 H13 V12 H8.5Z" fill="none" stroke="#333" stroke-width="1.1"/></svg>
<svg style="position:absolute;left:1440.0px;top:1372.0px;" width="15" height="14" viewBox="0 0 15 14"><path d="M1.5 2 H6.5 V12 H1.5Z M8.5 2 H13.5 V12 H8.5Z" fill="none" stroke="#333" stroke-width="1.1"/><path d="M3 4.5H5 M3 6.5H5 M3 8.5H5 M10 4.5H12 M10 6.5H12" stroke="#333" stroke-width=".9"/></svg>
<svg style="position:absolute;left:1480.0px;top:1373.0px;" width="15" height="15" viewBox="0 0 15 15"><rect x="1.5" y="1.5" width="12" height="7.5" fill="none" stroke="#333" stroke-width="1.1"/><path d="M7.5 9 V13 M4.5 13.2 H10.5" stroke="#333" stroke-width="1.1"/></svg>
<div style="position:absolute;left:1516.0px;top:1380.0px;width:94.0px;height:1.0px;background:#555;"></div>
<div style="position:absolute;top:1369.5px;line-height:20px;font-size:15.00px;color:#333;white-space:nowrap;left:1630.0px;">+</div>
<div style="position:absolute;top:1372.5px;line-height:15px;font-size:11.80px;color:#3a3a3a;white-space:nowrap;left:1652.0px;">80 %</div>
<svg style="position:absolute;left:1687.9px;top:1371.9px;" width="15" height="15" viewBox="0 0 15 15"><rect x="4.5" y="4.5" width="6" height="6" fill="none" stroke="#333" stroke-width="1.1"/><path d="M5.3 2.6 L7.5 .7 L9.7 2.6 M5.3 12.4 L7.5 14.3 L9.7 12.4 M2.6 5.3 L.7 7.5 L2.6 9.7 M12.4 5.3 L14.3 7.5 L12.4 9.7" fill="none" stroke="#333" stroke-width="1.1"/></svg>
</div>
<div style="position:absolute;left:1718.9px;top:24.58px;width:1.1px;height:3px;background:#d8331a"></div>
<div style="position:absolute;left:1718.9px;top:76.13px;width:1.1px;height:3px;background:#d8331a"></div>
<div style="position:absolute;left:1718.9px;top:127.69px;width:1.1px;height:3px;background:#d8331a"></div>
<div style="position:absolute;left:1718.9px;top:179.24px;width:1.1px;height:3px;background:#d8331a"></div>
<div style="position:absolute;left:1718.9px;top:230.80px;width:1.1px;height:3px;background:#d8331a"></div>
<div style="position:absolute;left:1718.9px;top:282.36px;width:1.1px;height:3px;background:#d8331a"></div>
<div style="position:absolute;left:1718.9px;top:333.91px;width:1.1px;height:3px;background:#d8331a"></div>
<div style="position:absolute;left:1718.9px;top:385.47px;width:1.1px;height:3px;background:#d8331a"></div>
<div style="position:absolute;left:1718.9px;top:437.02px;width:1.1px;height:3px;background:#d8331a"></div>
<div style="position:absolute;left:1718.9px;top:488.58px;width:1.1px;height:3px;background:#d8331a"></div>
<div style="position:absolute;left:1718.9px;top:540.13px;width:1.1px;height:3px;background:#d8331a"></div>
<div style="position:absolute;left:1718.9px;top:591.69px;width:1.1px;height:3px;background:#d8331a"></div>
<div style="position:absolute;left:1718.9px;top:643.24px;width:1.1px;height:3px;background:#d8331a"></div>
<div style="position:absolute;left:1718.9px;top:694.80px;width:1.1px;height:3px;background:#d8331a"></div>
<div style="position:absolute;left:1718.9px;top:746.36px;width:1.1px;height:3px;background:#d8331a"></div>
<div style="position:absolute;left:1718.9px;top:797.91px;width:1.1px;height:3px;background:#d8331a"></div>
<div style="position:absolute;left:1718.9px;top:849.47px;width:1.1px;height:3px;background:#d8331a"></div>
<div style="position:absolute;left:1718.9px;top:901.02px;width:1.1px;height:3px;background:#d8331a"></div>
<div style="position:absolute;left:1718.9px;top:952.58px;width:1.1px;height:3px;background:#d8331a"></div>
<div style="position:absolute;left:1718.9px;top:1004.13px;width:1.1px;height:3px;background:#d8331a"></div>
<div style="position:absolute;left:1718.9px;top:1055.69px;width:1.1px;height:3px;background:#d8331a"></div>
<div style="position:absolute;left:1718.9px;top:1107.24px;width:1.1px;height:3px;background:#d8331a"></div>
<div style="position:absolute;left:1718.9px;top:1158.80px;width:1.1px;height:3px;background:#d8331a"></div>
<div style="position:absolute;left:1718.9px;top:1210.36px;width:1.1px;height:3px;background:#d8331a"></div>
<div style="position:absolute;left:1718.9px;top:1261.91px;width:1.1px;height:3px;background:#d8331a"></div>
<div style="position:absolute;left:1718.9px;top:1313.47px;width:1.1px;height:3px;background:#d8331a"></div>
<div style="position:absolute;left:1718.9px;top:1365.02px;width:1.1px;height:3px;background:#d8331a"></div>
<div style="position:absolute;left:1694.4px;top:1390.2px;width:1.2px;height:1.5px;background:#d8331a"></div>
</div>
</body></html>
